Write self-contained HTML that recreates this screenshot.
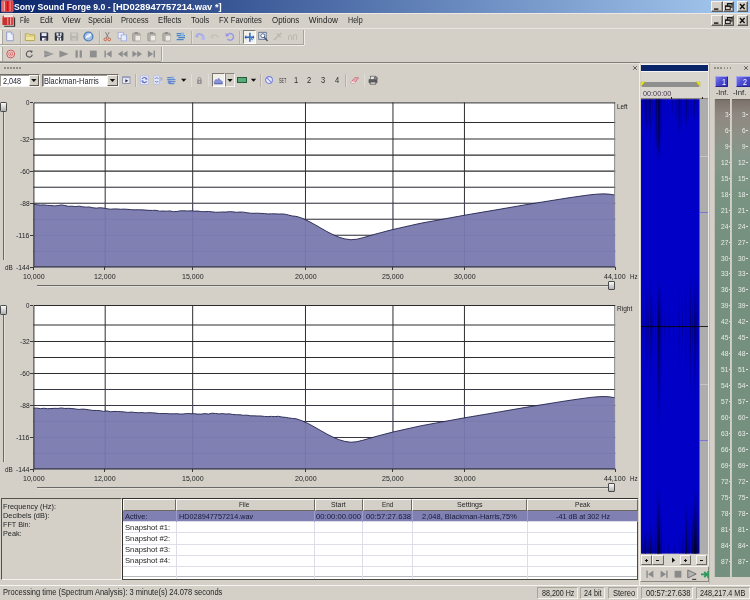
<!DOCTYPE html>
<html><head><meta charset="utf-8"><title>Sony Sound Forge 9.0</title>
<style>
*{margin:0;padding:0;box-sizing:border-box}
html,body{width:750px;height:600px;overflow:hidden;background:#d4d0c8;font-family:"Liberation Sans","DejaVu Sans",sans-serif;font-size:8px;color:#2a2a2a}
#root{position:absolute;left:0;top:0;width:750px;height:600px;will-change:transform}
.a{position:absolute}
.t{position:absolute;white-space:nowrap;line-height:1;transform-origin:0 0}
</style></head><body>
<div id="root">
<div class="a" style="left:0px;top:0px;width:750px;height:12.5px;background:linear-gradient(90deg,#0a246a 0%,#5777b0 50%,#a6caf0 100%)"></div><div class="a" style="left:0px;top:12.5px;width:750px;height:1.1px;background:#ebe9e3"></div><svg class="a" style="left:1px;top:0px" width="13" height="13" viewBox="0 0 13 13" ><g transform="translate(0.00 0.00)"><rect x="0.3" y="0.6" width="11.8" height="11.2" rx="0.8" fill="#da3434" stroke="#eeb0b0" stroke-width="0.5"/><rect x="1" y="1.2" width="2" height="10" fill="#e86a6a"/><rect x="3" y="1.2" width="1.1" height="10" fill="#f3a8a8"/><rect x="4.1" y="1.2" width="2" height="10" fill="#e03232"/><rect x="6.1" y="1.2" width="1" height="10" fill="#a81c1c"/><rect x="7.1" y="1.2" width="1.5" height="10" fill="#ea2424"/><rect x="8.6" y="1.2" width="1" height="10" fill="#f3a0a0"/></g></svg><span class="t" style="left:14.4px;top:3.00px;font-size:9.2px;color:#fff;font-weight:bold;white-space:pre;transform:scaleX(0.941);">Sony Sound Forge 9.0 - </span><span class="t" style="left:113.3px;top:3.00px;font-size:9.2px;color:#fff;font-weight:bold;transform:scaleX(1.018);">[HD028947757214.wav *]</span><div class="a" style="left:711px;top:1px;width:11.6px;height:10.8px;background:#d4d0c8;border:1px solid;border-color:#f6f4f0 #5e5c57 #5e5c57 #f6f4f0;box-shadow:inset -1px -1px 0 #9a968e"></div><svg class="a" style="left:711px;top:1px" width="12" height="11" viewBox="0 0 12 11" ><g transform="translate(0.00 0.00)"><rect x="3" y="7.4" width="4.4" height="1.4" fill="#111"/></g></svg><div class="a" style="left:722.8px;top:1px;width:11.6px;height:10.8px;background:#d4d0c8;border:1px solid;border-color:#f6f4f0 #5e5c57 #5e5c57 #f6f4f0;box-shadow:inset -1px -1px 0 #9a968e"></div><svg class="a" style="left:722px;top:1px" width="13" height="11" viewBox="0 0 13 11" ><g transform="translate(0.80 0.00)"><rect x="4.6" y="2.6" width="4.6" height="3.6" fill="none" stroke="#111" stroke-width="0.9"/><rect x="4.2" y="2.2" width="5.4" height="1.2" fill="#111"/><rect x="2.6" y="5" width="4.8" height="3.6" fill="#d4d0c8" stroke="#111" stroke-width="0.9"/><rect x="2.2" y="4.6" width="5.6" height="1.2" fill="#111"/></g></svg><div class="a" style="left:736.6px;top:1px;width:11.6px;height:10.8px;background:#d4d0c8;border:1px solid;border-color:#f6f4f0 #5e5c57 #5e5c57 #f6f4f0;box-shadow:inset -1px -1px 0 #9a968e"></div><svg class="a" style="left:736px;top:1px" width="13" height="11" viewBox="0 0 13 11" ><g transform="translate(0.60 0.00)"><path d="M3.4 3 L8 8 M8 3 L3.4 8" stroke="#111" stroke-width="1.4"/></g></svg><svg class="a" style="left:2px;top:14px" width="14" height="13" viewBox="0 0 14 13" ><g transform="translate(0.00 0.00)"><path d="M2.2 12.2 H12.6 V3.4" fill="none" stroke="#2e2e2e" stroke-width="1.1"/><rect x="0.6" y="1.8" width="11" height="9.2" rx="0.8" fill="#de4646"/><rect x="0.6" y="4" width="4.4" height="7" fill="#c83030"/><rect x="2" y="1" width="9" height="2.2" fill="#f6e4e2"/><rect x="5.4" y="3.6" width="1.1" height="7" fill="#f2a6a6"/><rect x="7.9" y="3.6" width="1.1" height="7" fill="#f2a6a6"/><rect x="6.6" y="3.6" width="1.2" height="7" fill="#b82222"/></g></svg><span class="t" style="left:19.8px;top:17.00px;font-size:8.2px;color:#242424;transform:scaleX(0.735);">File</span><span class="t" style="left:39.6px;top:17.00px;font-size:8.2px;color:#242424;transform:scaleX(0.914);">Edit</span><span class="t" style="left:61.9px;top:17.00px;font-size:8.2px;color:#242424;transform:scaleX(1.056);">View</span><span class="t" style="left:87.5px;top:17.00px;font-size:8.2px;color:#242424;transform:scaleX(0.894);">Special</span><span class="t" style="left:120.5px;top:17.00px;font-size:8.2px;color:#242424;transform:scaleX(0.930);">Process</span><span class="t" style="left:157.9px;top:17.00px;font-size:8.2px;color:#242424;transform:scaleX(0.940);">Effects</span><span class="t" style="left:191px;top:17.00px;font-size:8.2px;color:#242424;transform:scaleX(0.957);">Tools</span><span class="t" style="left:219.2px;top:17.00px;font-size:8.2px;color:#242424;transform:scaleX(0.924);">FX Favorites</span><span class="t" style="left:272px;top:17.00px;font-size:8.2px;color:#242424;transform:scaleX(0.964);">Options</span><span class="t" style="left:308.8px;top:17.00px;font-size:8.2px;color:#242424;">Window</span><span class="t" style="left:347.5px;top:17.00px;font-size:8.2px;color:#242424;transform:scaleX(0.867);">Help</span><div class="a" style="left:711px;top:15px;width:11.6px;height:10.8px;background:#d4d0c8;border:1px solid;border-color:#f6f4f0 #5e5c57 #5e5c57 #f6f4f0;box-shadow:inset -1px -1px 0 #9a968e"></div><svg class="a" style="left:711px;top:15px" width="12" height="11" viewBox="0 0 12 11" ><g transform="translate(0.00 0.00)"><rect x="3" y="7.4" width="4.4" height="1.4" fill="#111"/></g></svg><div class="a" style="left:722.8px;top:15px;width:11.6px;height:10.8px;background:#d4d0c8;border:1px solid;border-color:#f6f4f0 #5e5c57 #5e5c57 #f6f4f0;box-shadow:inset -1px -1px 0 #9a968e"></div><svg class="a" style="left:722px;top:15px" width="13" height="11" viewBox="0 0 13 11" ><g transform="translate(0.80 0.00)"><rect x="4.6" y="2.6" width="4.6" height="3.6" fill="none" stroke="#111" stroke-width="0.9"/><rect x="4.2" y="2.2" width="5.4" height="1.2" fill="#111"/><rect x="2.6" y="5" width="4.8" height="3.6" fill="#d4d0c8" stroke="#111" stroke-width="0.9"/><rect x="2.2" y="4.6" width="5.6" height="1.2" fill="#111"/></g></svg><div class="a" style="left:736.6px;top:15px;width:11.6px;height:10.8px;background:#d4d0c8;border:1px solid;border-color:#f6f4f0 #5e5c57 #5e5c57 #f6f4f0;box-shadow:inset -1px -1px 0 #9a968e"></div><svg class="a" style="left:736px;top:15px" width="13" height="11" viewBox="0 0 13 11" ><g transform="translate(0.60 0.00)"><path d="M3.4 3 L8 8 M8 3 L3.4 8" stroke="#111" stroke-width="1.4"/></g></svg><div class="a" style="left:0px;top:27.6px;width:750px;height:0.8px;background:#c2beb6"></div><div class="a" style="left:0px;top:28.4px;width:750px;height:0.8px;background:#e8e6e0"></div><div class="a" style="left:0px;top:44.3px;width:303.3px;height:1px;background:#a8a49c"></div><div class="a" style="left:0px;top:45.3px;width:304.3px;height:0.8px;background:#f0eee8"></div><div class="a" style="left:302.8px;top:29.5px;width:1px;height:15.3px;background:#a8a49c"></div><div class="a" style="left:303.8px;top:29.5px;width:0.8px;height:15.3px;background:#f0eee8"></div><div class="a" style="left:0px;top:29.5px;width:2px;height:14.8px;background:#eeece6"></div><div class="a" style="left:2px;top:29.5px;width:0.8px;height:14.8px;background:#aaa69e"></div><div class="a" style="left:0px;top:60.5px;width:161px;height:1px;background:#a8a49c"></div><div class="a" style="left:0px;top:61.5px;width:162px;height:0.8px;background:#f0eee8"></div><div class="a" style="left:160.5px;top:46.5px;width:1px;height:14.5px;background:#a8a49c"></div><div class="a" style="left:161.5px;top:46.5px;width:0.8px;height:14.5px;background:#f0eee8"></div><div class="a" style="left:0px;top:46.5px;width:2px;height:14px;background:#eeece6"></div><div class="a" style="left:2px;top:46.5px;width:0.8px;height:14px;background:#aaa69e"></div><svg class="a" style="left:4px;top:30px" width="12" height="13" viewBox="0 0 12 13" ><g transform="translate(0.00 0.50)"><path d="M2.7 1.5 H7.2 L9.3 3.6 V10.2 H2.7 Z" fill="#eef1fb" stroke="#8a98c8" stroke-width="0.9"/><path d="M7.2 1.5 V3.6 H9.3" fill="#c8d2ee" stroke="#8a98c8" stroke-width="0.6"/></g></svg><div class="a" style="left:20.1px;top:31px;width:0.9px;height:12.5px;background:#b6b2aa"></div><div class="a" style="left:21px;top:31px;width:0.7px;height:12.5px;background:#e0ddd6"></div><svg class="a" style="left:24px;top:30px" width="12" height="13" viewBox="0 0 12 13" ><g transform="translate(0.00 0.50)"><path d="M1.3 3.3 H4.6 L5.5 4.3 H10.7 V10 H1.3 Z" fill="#efe3a0" stroke="#b4a44c" stroke-width="0.9"/><path d="M1.3 5.6 H10.7" stroke="#c8b860" stroke-width="0.7"/></g></svg><svg class="a" style="left:38px;top:30px" width="12" height="13" viewBox="0 0 12 13" ><g transform="translate(0.00 0.50)"><rect x="2" y="2" width="8.2" height="8.2" rx="0.6" fill="#2b2f46"/><rect x="3.6" y="2.6" width="5" height="3" fill="#e8ecf6"/><rect x="4" y="7.3" width="4.2" height="2.9" fill="#f4f4f8"/><rect x="6.6" y="7.8" width="1" height="2" fill="#2b2f46"/></g></svg><svg class="a" style="left:53px;top:30px" width="12" height="13" viewBox="0 0 12 13" ><g transform="translate(0.00 0.50)"><rect x="1.8" y="2" width="8.6" height="8.2" rx="0.6" fill="#30343e"/><rect x="3.4" y="2.6" width="5.2" height="2.6" fill="#dfe3ee"/><rect x="4" y="7.3" width="4.2" height="2.9" fill="#eeeef2"/><rect x="5.6" y="2.2" width="1.2" height="7.6" fill="#30343e"/><rect x="4.4" y="5.6" width="3.6" height="1.2" fill="#e8e8f0"/></g></svg><svg class="a" style="left:68px;top:30px" width="12" height="13" viewBox="0 0 12 13" ><g transform="translate(0.00 0.50)"><rect x="2" y="2" width="8.2" height="8.2" rx="0.6" fill="#b9b6ae"/><rect x="3.6" y="2.6" width="5" height="3" fill="#d0cdc6"/><rect x="4" y="7.3" width="4.2" height="2.9" fill="#c8c5be"/></g></svg><svg class="a" style="left:82px;top:30px" width="13" height="13" viewBox="0 0 13 13" ><g transform="translate(0.40 0.50)"><circle cx="6" cy="6" r="4.5" fill="#9fc0e4" stroke="#4a78b4" stroke-width="1.2"/><path d="M3.6 8 Q4.4 4.4 8 3.8 Q7.6 6.4 5 6.6" fill="none" stroke="#f4f8fe" stroke-width="1.2"/></g></svg><div class="a" style="left:98.7px;top:31px;width:0.9px;height:12.5px;background:#b6b2aa"></div><div class="a" style="left:99.6px;top:31px;width:0.7px;height:12.5px;background:#e0ddd6"></div><svg class="a" style="left:101px;top:30px" width="13" height="13" viewBox="0 0 13 13" ><g transform="translate(0.30 0.50)"><path d="M4.2 1.6 L7.2 7.6 M7.8 1.6 L4.8 7.6" stroke="#858585" stroke-width="1"/><circle cx="4.1" cy="8.9" r="1.35" fill="none" stroke="#c8623e" stroke-width="0.95"/><circle cx="7.9" cy="8.9" r="1.35" fill="none" stroke="#c8623e" stroke-width="0.95"/></g></svg><svg class="a" style="left:116px;top:30px" width="13" height="13" viewBox="0 0 13 13" ><g transform="translate(0.30 0.50)"><rect x="1.8" y="1.8" width="5.4" height="6" fill="#f0f2fb" stroke="#9aa6dc" stroke-width="0.8"/><rect x="4.8" y="4.4" width="5.4" height="6" fill="#e9edf9" stroke="#9aa6dc" stroke-width="0.8"/></g></svg><svg class="a" style="left:130px;top:30px" width="13" height="13" viewBox="0 0 13 13" ><g transform="translate(0.50 0.50)"><rect x="2" y="2.6" width="7.6" height="7.8" rx="0.8" fill="#b2aea8" stroke="#9c9892" stroke-width="0.7"/><rect x="4.2" y="1.6" width="3.2" height="1.8" fill="#8e8a84"/><rect x="4.6" y="5" width="5.4" height="5.4" fill="#ecebe6" stroke="#b4b0a8" stroke-width="0.6"/></g></svg><svg class="a" style="left:145px;top:30px" width="13" height="13" viewBox="0 0 13 13" ><g transform="translate(0.70 0.50)"><rect x="2" y="2.6" width="7.6" height="7.8" rx="0.8" fill="#b2aea8" stroke="#9c9892" stroke-width="0.7"/><rect x="4.2" y="1.6" width="3.2" height="1.8" fill="#8e8a84"/><rect x="4.6" y="5" width="5.4" height="5.4" fill="#ecebe6" stroke="#b4b0a8" stroke-width="0.6"/></g></svg><svg class="a" style="left:160px;top:30px" width="13" height="13" viewBox="0 0 13 13" ><g transform="translate(0.70 0.50)"><rect x="2" y="2.6" width="7.6" height="7.8" rx="0.8" fill="#b2aea8" stroke="#9c9892" stroke-width="0.7"/><rect x="4.2" y="1.6" width="3.2" height="1.8" fill="#8e8a84"/><rect x="4.6" y="5" width="5.4" height="5.4" fill="#ecebe6" stroke="#b4b0a8" stroke-width="0.6"/></g></svg><svg class="a" style="left:174px;top:30px" width="13" height="13" viewBox="0 0 13 13" ><g transform="translate(0.60 0.50)"><path d="M2 3.2 H9 M2 5.2 H10.4 M3.5 7.2 H10.4 M2 9.2 H9" stroke="#4a86c4" stroke-width="1.2"/><rect x="6.2" y="2" width="3" height="3.6" fill="#8fb6e0"/></g></svg><div class="a" style="left:191px;top:31px;width:0.9px;height:12.5px;background:#b6b2aa"></div><div class="a" style="left:191.9px;top:31px;width:0.7px;height:12.5px;background:#e0ddd6"></div><svg class="a" style="left:194px;top:30px" width="13" height="13" viewBox="0 0 13 13" ><g transform="translate(0.40 0.50)"><path d="M1.6 6.6 Q2.6 3 5.6 3.6 Q8.6 4.2 9.6 7" fill="none" stroke="#a6aae8" stroke-width="1.8"/><rect x="7" y="6" width="3.6" height="3.4" fill="#b4b8ec"/><path d="M1.4 4 L2 7.6 L4.6 6 Z" fill="#a6aae8"/></g></svg><svg class="a" style="left:208px;top:30px" width="13" height="13" viewBox="0 0 13 13" ><g transform="translate(0.70 0.50)"><path d="M2.4 7.4 Q3.4 4 6.4 4.4 Q9 4.8 9.8 7.4" fill="none" stroke="#c6c2ba" stroke-width="1.5"/><path d="M2 4.6 L2.6 8 L5.6 6.8 Z" fill="#c6c2ba"/></g></svg><svg class="a" style="left:224px;top:30px" width="12" height="13" viewBox="0 0 12 13" ><g transform="translate(0.00 0.50)"><path d="M3 5 A3.4 3.4 0 1 1 3.6 8.6" fill="none" stroke="#9498e6" stroke-width="1.5"/><path d="M1.4 2.6 L2 6.4 L5.4 5 Z" fill="#9498e6"/></g></svg><div class="a" style="left:238.7px;top:31px;width:0.9px;height:12.5px;background:#b6b2aa"></div><div class="a" style="left:239.6px;top:31px;width:0.7px;height:12.5px;background:#e0ddd6"></div><div class="a" style="left:242.7px;top:30.2px;width:13.5px;height:14px;background:#f3f1ec;border:1px solid;border-color:#807c74 #fff #fff #807c74"></div><svg class="a" style="left:243px;top:31px" width="13" height="13" viewBox="0 0 13 13" ><g transform="translate(0.30 0.20)"><path d="M6.6 1.6 V10.6 M1.6 6 H10.4" stroke="#2a64b4" stroke-width="1.5"/><path d="M3 3.8 L1.2 6 L3 8.2 Z M9.6 3.8 L11 6 L9.6 8.2Z" fill="#2a64b4"/><path d="M6.6 6 L9.4 8.8" stroke="#5a8cd0" stroke-width="1.2"/></g></svg><svg class="a" style="left:257px;top:30px" width="13" height="13" viewBox="0 0 13 13" ><g transform="translate(0.20 0.50)"><rect x="1.6" y="1.8" width="7.4" height="7" fill="#e6eaf2" stroke="#5c6c8c" stroke-width="0.9"/><circle cx="5.6" cy="5.2" r="2" fill="#fff" stroke="#46587c" stroke-width="0.9"/><path d="M7 6.8 L10.4 10.4" stroke="#46587c" stroke-width="1.4"/></g></svg><svg class="a" style="left:271px;top:30px" width="13" height="13" viewBox="0 0 13 13" ><g transform="translate(0.80 0.50)"><path d="M2 9.6 L9.6 2.4 M5 3 L9 7" stroke="#bdb9b1" stroke-width="1.5"/><circle cx="4" cy="8" r="1.3" fill="#c4c0b8"/></g></svg><svg class="a" style="left:287px;top:30px" width="12" height="13" viewBox="0 0 12 13" ><g transform="translate(0.00 0.50)"><path d="M1.6 9.6 V6 Q3 3 4.6 6 V9.6 M6.4 9.6 V5 Q8 2.4 9.6 5 V9.6" fill="none" stroke="#bdb9b1" stroke-width="1.1"/></g></svg><svg class="a" style="left:4px;top:48px" width="13" height="12" viewBox="0 0 13 12" ><g transform="translate(0.70 0.00)"><circle cx="6" cy="6" r="3.9" fill="#f2dedc" stroke="#c84e4e" stroke-width="0.95"/><circle cx="6" cy="6" r="2.1" fill="#f6e6e4" stroke="#cf5c5c" stroke-width="0.8"/><circle cx="6" cy="6" r="0.85" fill="#c84444"/></g></svg><div class="a" style="left:20.1px;top:48px;width:0.9px;height:12px;background:#b6b2aa"></div><div class="a" style="left:21px;top:48px;width:0.7px;height:12px;background:#e0ddd6"></div><svg class="a" style="left:23px;top:48px" width="13" height="12" viewBox="0 0 13 12" ><g transform="translate(0.30 0.00)"><path d="M8.4 4.2 A3 3 0 1 0 9 6.6" fill="none" stroke="#585858" stroke-width="1.1"/><path d="M6.8 2.4 L9.4 2.8 L8.5 5.2 Z" fill="#585858"/></g></svg><svg class="a" style="left:43px;top:48px" width="13" height="12" viewBox="0 0 13 12" ><g transform="translate(0.30 0.00)"><path d="M1 2.4 L10.6 6 L1 9.6 Z" fill="#8e8e8e"/><path d="M1 6 H10" stroke="#b8b8b8" stroke-width="0.8"/></g></svg><svg class="a" style="left:58px;top:48px" width="12" height="12" viewBox="0 0 12 12" ><g transform="translate(0.00 0.00)"><path d="M1.4 2.4 L10.6 6 L1.4 9.6 Z" fill="#8e8e8e"/></g></svg><svg class="a" style="left:72px;top:48px" width="13" height="12" viewBox="0 0 13 12" ><g transform="translate(0.70 0.00)"><rect x="2.8" y="2.4" width="2.3" height="7.2" fill="#8e8e8e"/><rect x="6.9" y="2.4" width="2.3" height="7.2" fill="#8e8e8e"/></g></svg><svg class="a" style="left:87px;top:48px" width="13" height="12" viewBox="0 0 13 12" ><g transform="translate(0.30 0.00)"><rect x="2.6" y="2.6" width="6.8" height="6.8" fill="#8e8e8e"/></g></svg><svg class="a" style="left:102px;top:48px" width="12" height="12" viewBox="0 0 12 12" ><g transform="translate(0.00 0.00)"><rect x="2.4" y="2.6" width="1.5" height="6.8" fill="#8e8e8e"/><path d="M9.6 2.6 L4.2 6 L9.6 9.4 Z" fill="#8e8e8e"/></g></svg><svg class="a" style="left:116px;top:48px" width="13" height="12" viewBox="0 0 13 12" ><g transform="translate(0.70 0.00)"><path d="M6 2.8 L1.2 6 L6 9.2 Z M10.8 2.8 L6 6 L10.8 9.2 Z" fill="#8e8e8e"/></g></svg><svg class="a" style="left:131px;top:48px" width="13" height="12" viewBox="0 0 13 12" ><g transform="translate(0.20 0.00)"><path d="M1.2 2.8 L6 6 L1.2 9.2 Z M6 2.8 L10.8 6 L6 9.2 Z" fill="#8e8e8e"/></g></svg><svg class="a" style="left:145px;top:48px" width="13" height="12" viewBox="0 0 13 12" ><g transform="translate(0.40 0.00)"><rect x="8.1" y="2.6" width="1.5" height="6.8" fill="#8e8e8e"/><path d="M2.4 2.6 L7.8 6 L2.4 9.4 Z" fill="#8e8e8e"/></g></svg><div class="a" style="left:0px;top:61.6px;width:640px;height:1px;background:#827e76"></div><div class="a" style="left:640px;top:61.6px;width:110px;height:1px;background:#b6b2aa"></div><div class="a" style="left:0px;top:62.6px;width:750px;height:1px;background:#e4e2dc"></div><div class="a" style="left:641px;top:63.6px;width:67px;height:1px;background:#f4f2ee"></div><div class="a" style="left:4.2px;top:67.2px;width:1.6px;height:1.6px;background:#86827b;border-radius:0.7px"></div><div class="a" style="left:7.2px;top:67.2px;width:1.6px;height:1.6px;background:#86827b;border-radius:0.7px"></div><div class="a" style="left:10.2px;top:67.2px;width:1.6px;height:1.6px;background:#86827b;border-radius:0.7px"></div><div class="a" style="left:13.2px;top:67.2px;width:1.6px;height:1.6px;background:#86827b;border-radius:0.7px"></div><div class="a" style="left:16.2px;top:67.2px;width:1.6px;height:1.6px;background:#86827b;border-radius:0.7px"></div><div class="a" style="left:19.2px;top:67.2px;width:1.6px;height:1.6px;background:#86827b;border-radius:0.7px"></div><svg class="a" style="left:632px;top:65px" width="6" height="6" viewBox="0 0 6 6" ><g transform="translate(0.00 0.00)"><path d="M1.2 1.2 L4.8 4.8 M4.8 1.2 L1.2 4.8" stroke="#4a4a4a" stroke-width="0.85"/></g></svg><div class="a" style="left:-1px;top:73.5px;width:41px;height:13.3px;background:#fff;border:1px solid;border-color:#6e6a64 #f4f2ee #f4f2ee #6e6a64;box-shadow:inset 1px 1px 0 #a09c94"></div><span class="t" style="left:2.7px;top:78.00px;font-size:8.2px;color:#26262e;transform:scaleX(0.883);">2,048</span><div class="a" style="left:28.7px;top:75px;width:10.3px;height:10.8px;background:#d4d0c8;border:1px solid;border-color:#f8f6f2 #5c5852 #5c5852 #f8f6f2"></div><svg class="a" style="left:31px;top:78px" width="6" height="4" viewBox="0 0 6 4" ><g transform="translate(0.15 0.95)"><path d="M0 0 H5.4 L2.7 3 Z" fill="#111"/></g></svg><div class="a" style="left:42.4px;top:73.5px;width:76.2px;height:13.3px;background:#fff;border:1px solid;border-color:#6e6a64 #f4f2ee #f4f2ee #6e6a64;box-shadow:inset 1px 1px 0 #a09c94"></div><span class="t" style="left:44.4px;top:78.00px;font-size:8.2px;color:#26262e;transform:scaleX(0.906);">Blackman-Harris</span><div class="a" style="left:107.3px;top:75px;width:10.3px;height:10.8px;background:#d4d0c8;border:1px solid;border-color:#f8f6f2 #5c5852 #5c5852 #f8f6f2"></div><svg class="a" style="left:109px;top:78px" width="7" height="4" viewBox="0 0 7 4" ><g transform="translate(0.75 0.95)"><path d="M0 0 H5.4 L2.7 3 Z" fill="#111"/></g></svg><svg class="a" style="left:120px;top:74px" width="13" height="12" viewBox="0 0 13 12" ><g transform="translate(0.20 0.00)"><rect x="2.4" y="2.8" width="7.4" height="6.6" fill="#e6e9f4" stroke="#8088a8" stroke-width="0.8"/><rect x="2.4" y="2.8" width="7.4" height="1.3" fill="#9aa2c6"/><path d="M5.2 5.2 L8 6.8 L5.2 8.4 Z" fill="#2a2a3a"/></g></svg><div class="a" style="left:135.1px;top:74px;width:0.9px;height:12.5px;background:#b6b2aa"></div><div class="a" style="left:136px;top:74px;width:0.7px;height:12.5px;background:#e0ddd6"></div><svg class="a" style="left:138px;top:74px" width="13" height="12" viewBox="0 0 13 12" ><g transform="translate(0.40 0.00)"><rect x="2.2" y="1.8" width="7.6" height="8.6" fill="#e4e9f7" stroke="#b0bae2" stroke-width="0.7"/><path d="M3.8 5 A2.4 2.4 0 0 1 8.2 5 M8.2 7.2 A2.4 2.4 0 0 1 3.8 7.2" fill="none" stroke="#5a6cc4" stroke-width="1.1"/><path d="M7.4 3.4 L9.4 5.6 L6.8 5.6Z M4.6 8.8 L2.6 6.6 L5.2 6.6Z" fill="#5a6cc4"/></g></svg><svg class="a" style="left:152px;top:74px" width="12" height="12" viewBox="0 0 12 12" ><g transform="translate(0.00 0.00)"><rect x="1.8" y="1.8" width="5.6" height="8.4" fill="#e4e9f7" stroke="#b0bae2" stroke-width="0.7"/><path d="M3 4.8 A1.9 1.9 0 0 1 6.4 4.8 M6.4 7 A1.9 1.9 0 0 1 3 7" fill="none" stroke="#6a7acc" stroke-width="1"/><path d="M8 3.2 L10.4 6.2 M10.2 3.4 L8.4 6.8" stroke="#9aa6dc" stroke-width="0.9"/><circle cx="9.2" cy="8.4" r="1.2" fill="#ccd4f0"/></g></svg><svg class="a" style="left:165px;top:74px" width="13" height="12" viewBox="0 0 13 12" ><g transform="translate(0.20 0.00)"><path d="M2 3.6 H8.4 M2 5.6 H10.2 M3.8 7.6 H10.2 M3.8 9.6 H9" stroke="#5c86d0" stroke-width="1.1"/><rect x="6" y="2.4" width="3" height="2.8" fill="#93b0e4"/><rect x="2.6" y="6.6" width="3" height="2.8" fill="#6a88d6"/></g></svg><svg class="a" style="left:181px;top:78px" width="6" height="4" viewBox="0 0 6 4" ><g transform="translate(0.00 0.80)"><path d="M0 0 H5.4 L2.7 3 Z" fill="#111"/></g></svg><div class="a" style="left:190.5px;top:74px;width:0.9px;height:12.5px;background:#b6b2aa"></div><div class="a" style="left:191.4px;top:74px;width:0.7px;height:12.5px;background:#e0ddd6"></div><svg class="a" style="left:193px;top:74px" width="13" height="13" viewBox="0 0 13 13" ><g transform="translate(0.40 0.40)"><rect x="3.7" y="5.4" width="4.6" height="4.2" rx="0.5" fill="#939393"/><path d="M4.6 5.6 V4.4 A1.4 1.4 0 0 1 7.4 4.4 V5.6" fill="none" stroke="#8a8a8a" stroke-width="0.9"/><rect x="5.6" y="6.6" width="0.8" height="1.6" fill="#dcdcdc"/></g></svg><div class="a" style="left:207.5px;top:74px;width:0.9px;height:12.5px;background:#b6b2aa"></div><div class="a" style="left:208.4px;top:74px;width:0.7px;height:12.5px;background:#e0ddd6"></div><div class="a" style="left:211.5px;top:73.3px;width:13.5px;height:13.7px;background:#f1efea;border:1px solid;border-color:#7a766e #fff #fff #7a766e"></div><svg class="a" style="left:212px;top:74px" width="13" height="13" viewBox="0 0 13 13" ><g transform="translate(0.30 0.30)"><path d="M2 9.2 V7.4 L3.8 5 L5 6.2 L6.4 4 L8.4 6.4 L10 7.2 V9.2 Z" fill="#8a94d8" stroke="#6470c0" stroke-width="0.7"/><path d="M2 9.5 H10.2" stroke="#4a56a0" stroke-width="0.8"/></g></svg><div class="a" style="left:225px;top:73.3px;width:9.6px;height:13.7px;background:#d4d0c8;border:1px solid;border-color:#8a867e #f4f2ee #f4f2ee #8a867e"></div><svg class="a" style="left:227px;top:78px" width="6" height="4" viewBox="0 0 6 4" ><g transform="translate(0.30 0.90)"><path d="M0 0 H5.4 L2.7 3 Z" fill="#111"/></g></svg><div class="a" style="left:237px;top:77.4px;width:9.8px;height:5.5px;background:#58ac78;border:1px solid #1e5c3c"></div><svg class="a" style="left:250px;top:78px" width="7" height="4" viewBox="0 0 7 4" ><g transform="translate(0.80 0.80)"><path d="M0 0 H5.4 L2.7 3 Z" fill="#111"/></g></svg><div class="a" style="left:260.1px;top:74px;width:0.9px;height:12.5px;background:#b6b2aa"></div><div class="a" style="left:261px;top:74px;width:0.7px;height:12.5px;background:#e0ddd6"></div><svg class="a" style="left:263px;top:74px" width="12" height="12" viewBox="0 0 12 12" ><g transform="translate(0.00 0.00)"><circle cx="6" cy="6" r="3.4" fill="#eceefb" stroke="#7680da" stroke-width="1.05"/><path d="M3.7 3.7 L8.3 8.3" stroke="#7680da" stroke-width="1.05"/></g></svg><span class="t" style="left:279.2px;top:77.00px;font-size:7.4px;color:#303030;transform:scaleX(0.515);">SET</span><span class="t" style="left:294.3px;top:76.00px;font-size:8.4px;color:#2c2c2c;transform:scaleX(0.899);">1</span><span class="t" style="left:307.3px;top:76.00px;font-size:8.4px;color:#2c2c2c;transform:scaleX(0.899);">2</span><span class="t" style="left:321.3px;top:76.00px;font-size:8.4px;color:#2c2c2c;transform:scaleX(0.899);">3</span><span class="t" style="left:334.9px;top:76.00px;font-size:8.4px;color:#2c2c2c;transform:scaleX(0.899);">4</span><div class="a" style="left:344.9px;top:74px;width:0.9px;height:12.5px;background:#b6b2aa"></div><div class="a" style="left:345.8px;top:74px;width:0.7px;height:12.5px;background:#e0ddd6"></div><svg class="a" style="left:348px;top:74px" width="13" height="12" viewBox="0 0 13 12" ><g transform="translate(0.60 0.00)"><path d="M2 8.6 L6.6 3.4 L10 3.8 L5.6 9.4 Z" fill="#e8a8b0" stroke="#c8606c" stroke-width="0.7"/><path d="M2 8.6 L5.6 9.4 L6.4 8.2 L3 7.4Z" fill="#f4f0f0"/></g></svg><div class="a" style="left:363.5px;top:74px;width:0.9px;height:12.5px;background:#b6b2aa"></div><div class="a" style="left:364.4px;top:74px;width:0.7px;height:12.5px;background:#e0ddd6"></div><svg class="a" style="left:367px;top:74px" width="12" height="12" viewBox="0 0 12 12" ><g transform="translate(0.00 0.00)"><rect x="1.6" y="5" width="8.8" height="4.2" rx="0.8" fill="#5c5c5c"/><rect x="3.4" y="2.2" width="5.2" height="3.2" fill="#e4e4e4" stroke="#5c5c5c" stroke-width="0.7"/><rect x="3.2" y="8" width="5.6" height="2.2" fill="#cfcfcf" stroke="#4c4c4c" stroke-width="0.6"/><circle cx="8.8" cy="4.4" r="1.6" fill="#8c8c8c" stroke="#3c3c3c" stroke-width="0.6"/></g></svg><svg class="a" style="left:33px;top:102px" width="583" height="166" viewBox="0 0 583 166" ><g transform="translate(0.40 0.40)"><rect x="0" y="0" width="581.8" height="165" fill="#fff"/><path d="M0 148.96 H581.8" stroke="#2c2c2c" stroke-width="1.1"/><path d="M0 132.92 H581.8" stroke="#2c2c2c" stroke-width="1.1"/><path d="M0 116.87 H581.8" stroke="#2c2c2c" stroke-width="1.1"/><path d="M0 100.83 H581.8" stroke="#2c2c2c" stroke-width="1.1"/><path d="M0 84.79 H581.8" stroke="#2c2c2c" stroke-width="1.1"/><path d="M0 68.75 H581.8" stroke="#2c2c2c" stroke-width="1.1"/><path d="M0 52.71 H581.8" stroke="#2c2c2c" stroke-width="1.1"/><path d="M0 36.67 H581.8" stroke="#2c2c2c" stroke-width="1.1"/><path d="M0 20.12 H581.8" stroke="#2c2c2c" stroke-width="1.1"/><path d="M71.78 0 V165" stroke="#2e2e2e" stroke-width="1"/><path d="M159.28 0 V165" stroke="#2e2e2e" stroke-width="1"/><path d="M272.07 0 V165" stroke="#2e2e2e" stroke-width="1"/><path d="M359.56 0 V165" stroke="#2e2e2e" stroke-width="1"/><path d="M431.05 0 V165" stroke="#2e2e2e" stroke-width="1"/><path d="M581.3 0 V165" stroke="#7e7e7e" stroke-width="1"/><path d="M0 165 L0.00 101.51 L3.50 102.38 L7.00 102.61 L10.50 102.51 L14.00 102.94 L17.50 103.11 L21.00 103.49 L24.50 103.17 L28.00 102.53 L31.50 103.10 L35.00 103.93 L38.50 103.77 L42.00 104.20 L45.50 103.75 L49.00 104.30 L52.50 104.73 L56.00 104.55 L59.50 105.42 L63.00 105.70 L66.50 105.32 L70.00 105.63 L73.50 106.30 L77.00 106.79 L80.50 106.51 L84.00 106.55 L87.50 106.87 L91.00 106.68 L94.50 106.95 L98.00 107.25 L101.50 107.42 L105.00 107.33 L108.50 107.47 L112.00 107.62 L115.50 107.97 L119.00 107.99 L122.50 107.93 L126.00 108.74 L129.50 108.62 L133.00 108.78 L136.50 108.51 L140.00 109.25 L143.50 109.11 L147.00 108.38 L150.50 108.41 L154.00 108.58 L157.50 108.44 L161.00 108.72 L164.50 108.64 L168.00 109.22 L171.50 109.23 L175.00 109.08 L178.50 109.45 L182.00 109.81 L185.50 109.81 L189.00 109.56 L192.50 109.66 L196.00 109.24 L199.50 109.44 L203.00 109.91 L206.50 109.63 L210.00 109.74 L213.50 110.36 L217.00 110.78 L220.50 110.90 L224.00 110.80 L227.50 110.99 L231.00 111.18 L234.50 111.52 L238.00 111.43 L241.50 111.44 L245.00 111.64 L248.50 111.51 L252.00 111.87 L255.50 112.75 L259.00 113.57 L262.50 113.95 L266.00 114.85 L269.50 116.16 L275.50 118.96 L281.50 122.27 L287.50 125.72 L293.50 129.17 L299.50 132.18 L305.50 134.76 L311.50 136.51 L317.50 137.34 L323.50 136.79 L329.50 135.34 L335.50 133.58 L341.50 131.83 L347.50 130.25 L353.50 128.67 L359.50 127.11 L365.50 125.76 L371.50 124.40 L377.50 123.05 L383.50 121.70 L389.50 120.47 L395.50 119.36 L401.50 118.26 L407.50 117.16 L413.50 116.05 L419.50 114.95 L425.50 113.85 L431.50 112.76 L437.50 111.74 L443.50 110.72 L449.50 109.70 L455.50 108.69 L461.50 107.67 L467.50 106.64 L473.50 105.60 L479.50 104.56 L485.50 103.52 L491.50 102.48 L497.50 101.46 L503.50 100.50 L509.50 99.54 L515.50 98.58 L521.50 97.62 L527.50 96.66 L533.50 95.70 L539.50 94.79 L545.50 93.95 L551.50 93.11 L557.50 92.32 L563.50 91.78 L569.50 91.46 L575.50 91.71 L581.00 92.60 L581.8 165 Z" fill="#8080b3"/><path d="M71.78 99 V165" stroke="#5c5ca0" stroke-opacity="0.3" stroke-width="1"/><path d="M159.28 99 V165" stroke="#5c5ca0" stroke-opacity="0.3" stroke-width="1"/><path d="M272.07 99 V165" stroke="#5c5ca0" stroke-opacity="0.3" stroke-width="1"/><path d="M359.56 99 V165" stroke="#5c5ca0" stroke-opacity="0.3" stroke-width="1"/><path d="M431.05 99 V165" stroke="#5c5ca0" stroke-opacity="0.3" stroke-width="1"/><path d="M0 148.96 H581.8" stroke="#6a6aa4" stroke-opacity="0.22" stroke-width="1"/><path d="M0 132.92 H581.8" stroke="#6a6aa4" stroke-opacity="0.22" stroke-width="1"/><path d="M0 116.87 H581.8" stroke="#6a6aa4" stroke-opacity="0.22" stroke-width="1"/><path d="M0 100.83 H581.8" stroke="#6a6aa4" stroke-opacity="0.22" stroke-width="1"/><path d="M0 84.79 H581.8" stroke="#6a6aa4" stroke-opacity="0.22" stroke-width="1"/><path d="M0.00 101.51 L3.50 102.38 L7.00 102.61 L10.50 102.51 L14.00 102.94 L17.50 103.11 L21.00 103.49 L24.50 103.17 L28.00 102.53 L31.50 103.10 L35.00 103.93 L38.50 103.77 L42.00 104.20 L45.50 103.75 L49.00 104.30 L52.50 104.73 L56.00 104.55 L59.50 105.42 L63.00 105.70 L66.50 105.32 L70.00 105.63 L73.50 106.30 L77.00 106.79 L80.50 106.51 L84.00 106.55 L87.50 106.87 L91.00 106.68 L94.50 106.95 L98.00 107.25 L101.50 107.42 L105.00 107.33 L108.50 107.47 L112.00 107.62 L115.50 107.97 L119.00 107.99 L122.50 107.93 L126.00 108.74 L129.50 108.62 L133.00 108.78 L136.50 108.51 L140.00 109.25 L143.50 109.11 L147.00 108.38 L150.50 108.41 L154.00 108.58 L157.50 108.44 L161.00 108.72 L164.50 108.64 L168.00 109.22 L171.50 109.23 L175.00 109.08 L178.50 109.45 L182.00 109.81 L185.50 109.81 L189.00 109.56 L192.50 109.66 L196.00 109.24 L199.50 109.44 L203.00 109.91 L206.50 109.63 L210.00 109.74 L213.50 110.36 L217.00 110.78 L220.50 110.90 L224.00 110.80 L227.50 110.99 L231.00 111.18 L234.50 111.52 L238.00 111.43 L241.50 111.44 L245.00 111.64 L248.50 111.51 L252.00 111.87 L255.50 112.75 L259.00 113.57 L262.50 113.95 L266.00 114.85 L269.50 116.16 L275.50 118.96 L281.50 122.27 L287.50 125.72 L293.50 129.17 L299.50 132.18 L305.50 134.76 L311.50 136.51 L317.50 137.34 L323.50 136.79 L329.50 135.34 L335.50 133.58 L341.50 131.83 L347.50 130.25 L353.50 128.67 L359.50 127.11 L365.50 125.76 L371.50 124.40 L377.50 123.05 L383.50 121.70 L389.50 120.47 L395.50 119.36 L401.50 118.26 L407.50 117.16 L413.50 116.05 L419.50 114.95 L425.50 113.85 L431.50 112.76 L437.50 111.74 L443.50 110.72 L449.50 109.70 L455.50 108.69 L461.50 107.67 L467.50 106.64 L473.50 105.60 L479.50 104.56 L485.50 103.52 L491.50 102.48 L497.50 101.46 L503.50 100.50 L509.50 99.54 L515.50 98.58 L521.50 97.62 L527.50 96.66 L533.50 95.70 L539.50 94.79 L545.50 93.95 L551.50 93.11 L557.50 92.32 L563.50 91.78 L569.50 91.46 L575.50 91.71 L581.00 92.60" fill="none" stroke="#22224e" stroke-width="0.9"/><path d="M581.8 0.5 H0.5 V164.5 H581.8" fill="none" stroke="#2a2a2a" stroke-width="1"/></g></svg><div class="a" style="left:30.2px;top:102.2px;width:3.2px;height:0.9px;background:#3a3a3a"></div><span class="t" style="left:26.2px;top:99.00px;font-size:7.6px;color:#242424;transform:scaleX(0.803);">0</span><div class="a" style="left:30.2px;top:138.867px;width:3.2px;height:0.9px;background:#3a3a3a"></div><span class="t" style="left:20px;top:136.00px;font-size:7.6px;color:#242424;transform:scaleX(0.874);">-32</span><div class="a" style="left:30.2px;top:170.95px;width:3.2px;height:0.9px;background:#3a3a3a"></div><span class="t" style="left:20px;top:168.00px;font-size:7.6px;color:#242424;transform:scaleX(0.874);">-60</span><div class="a" style="left:30.2px;top:203.033px;width:3.2px;height:0.9px;background:#3a3a3a"></div><span class="t" style="left:20px;top:200.00px;font-size:7.6px;color:#242424;transform:scaleX(0.874);">-88</span><div class="a" style="left:30.2px;top:235.117px;width:3.2px;height:0.9px;background:#3a3a3a"></div><span class="t" style="left:16.2px;top:232.00px;font-size:7.6px;color:#242424;transform:scaleX(0.915);">-116</span><div class="a" style="left:30.2px;top:267.2px;width:3.2px;height:0.9px;background:#3a3a3a"></div><span class="t" style="left:16.2px;top:264.00px;font-size:7.6px;color:#242424;transform:scaleX(0.881);">-144</span><span class="t" style="left:5px;top:264.00px;font-size:7.6px;color:#242424;transform:scaleX(0.839);">dB</span><span class="t" style="left:23px;top:273.00px;font-size:7.6px;color:#242424;transform:scaleX(0.930);">10,000</span><div class="a" style="left:33px;top:267.4px;width:0.9px;height:2.5px;background:#3a3a3a"></div><span class="t" style="left:94.4849px;top:273.00px;font-size:7.6px;color:#242424;transform:scaleX(0.930);">12,000</span><div class="a" style="left:104.485px;top:267.4px;width:0.9px;height:2.5px;background:#3a3a3a"></div><span class="t" style="left:181.975px;top:273.00px;font-size:7.6px;color:#242424;transform:scaleX(0.930);">15,000</span><div class="a" style="left:191.975px;top:267.4px;width:0.9px;height:2.5px;background:#3a3a3a"></div><span class="t" style="left:294.77px;top:273.00px;font-size:7.6px;color:#242424;transform:scaleX(0.930);">20,000</span><div class="a" style="left:304.77px;top:267.4px;width:0.9px;height:2.5px;background:#3a3a3a"></div><span class="t" style="left:382.261px;top:273.00px;font-size:7.6px;color:#242424;transform:scaleX(0.930);">25,000</span><div class="a" style="left:392.261px;top:267.4px;width:0.9px;height:2.5px;background:#3a3a3a"></div><span class="t" style="left:453.746px;top:273.00px;font-size:7.6px;color:#242424;transform:scaleX(0.930);">30,000</span><div class="a" style="left:463.746px;top:267.4px;width:0.9px;height:2.5px;background:#3a3a3a"></div><span class="t" style="left:604.4px;top:273.00px;font-size:7.6px;color:#242424;transform:scaleX(0.930);">44,100</span><div class="a" style="left:614.8px;top:267.4px;width:0.9px;height:2.5px;background:#3a3a3a"></div><span class="t" style="left:630.2px;top:273.00px;font-size:7.6px;color:#242424;transform:scaleX(0.819);">Hz</span><span class="t" style="left:617.4px;top:103.00px;font-size:7.6px;color:#242424;transform:scaleX(0.836);">Left</span><div class="a" style="left:2.9px;top:111.4px;width:1.2px;height:149px;background:#686868"></div><div class="a" style="left:4.1px;top:111.4px;width:0.6px;height:149px;background:#e2dfd9"></div><div class="a" style="left:0.4px;top:102.4px;width:6.8px;height:9.8px;background:linear-gradient(180deg,#fafafa,#b0b0b0);border:1px solid #4a4a4a;border-radius:1.2px"></div><div class="a" style="left:36.7px;top:284.7px;width:575.3px;height:1.3px;background:#686868"></div><div class="a" style="left:36.7px;top:286px;width:575.3px;height:0.6px;background:#e2dfd9"></div><div class="a" style="left:608px;top:280.9px;width:7.2px;height:8.9px;background:linear-gradient(180deg,#fafafa,#b4b4b4);border:1px solid #4a4a4a;border-radius:1px"></div><svg class="a" style="left:33px;top:305px" width="583" height="165" viewBox="0 0 583 165" ><g transform="translate(0.40 0.00)"><rect x="0" y="0" width="581.8" height="164.4" fill="#fff"/><path d="M0 148.42 H581.8" stroke="#2c2c2c" stroke-width="1.1"/><path d="M0 132.43 H581.8" stroke="#2c2c2c" stroke-width="1.1"/><path d="M0 116.45 H581.8" stroke="#2c2c2c" stroke-width="1.1"/><path d="M0 100.47 H581.8" stroke="#2c2c2c" stroke-width="1.1"/><path d="M0 84.48 H581.8" stroke="#2c2c2c" stroke-width="1.1"/><path d="M0 68.50 H581.8" stroke="#2c2c2c" stroke-width="1.1"/><path d="M0 52.52 H581.8" stroke="#2c2c2c" stroke-width="1.1"/><path d="M0 36.53 H581.8" stroke="#2c2c2c" stroke-width="1.1"/><path d="M0 20.05 H581.8" stroke="#2c2c2c" stroke-width="1.1"/><path d="M71.78 0 V164.4" stroke="#2e2e2e" stroke-width="1"/><path d="M159.28 0 V164.4" stroke="#2e2e2e" stroke-width="1"/><path d="M272.07 0 V164.4" stroke="#2e2e2e" stroke-width="1"/><path d="M359.56 0 V164.4" stroke="#2e2e2e" stroke-width="1"/><path d="M431.05 0 V164.4" stroke="#2e2e2e" stroke-width="1"/><path d="M581.3 0 V164.4" stroke="#7e7e7e" stroke-width="1"/><path d="M0 164.4 L0.00 103.16 L3.50 103.13 L7.00 103.63 L10.50 103.28 L14.00 103.69 L17.50 103.57 L21.00 103.34 L24.50 103.43 L28.00 102.94 L31.50 103.46 L35.00 103.34 L38.50 103.52 L42.00 103.95 L45.50 104.43 L49.00 104.06 L52.50 104.35 L56.00 104.88 L59.50 105.44 L63.00 105.45 L66.50 105.63 L70.00 106.40 L73.50 105.92 L77.00 106.73 L80.50 106.45 L84.00 106.50 L87.50 106.64 L91.00 106.91 L94.50 107.44 L98.00 107.05 L101.50 107.49 L105.00 107.66 L108.50 107.59 L112.00 107.89 L115.50 107.66 L119.00 107.81 L122.50 108.09 L126.00 108.62 L129.50 108.52 L133.00 108.53 L136.50 108.84 L140.00 108.82 L143.50 108.71 L147.00 109.05 L150.50 108.91 L154.00 108.49 L157.50 108.69 L161.00 108.70 L164.50 109.12 L168.00 109.05 L171.50 108.60 L175.00 109.06 L178.50 108.28 L182.00 108.46 L185.50 108.90 L189.00 108.58 L192.50 109.02 L196.00 108.83 L199.50 109.49 L203.00 109.74 L206.50 109.75 L210.00 110.30 L213.50 110.17 L217.00 110.77 L220.50 110.83 L224.00 110.95 L227.50 111.00 L231.00 111.44 L234.50 111.64 L238.00 111.39 L241.50 111.65 L245.00 111.29 L248.50 112.04 L252.00 112.35 L255.50 112.97 L259.00 113.42 L262.50 113.69 L266.00 114.83 L269.50 116.14 L275.50 118.93 L281.50 122.22 L287.50 125.66 L293.50 129.10 L299.50 132.10 L305.50 134.67 L311.50 136.41 L317.50 137.24 L323.50 136.69 L329.50 135.24 L335.50 133.50 L341.50 131.75 L347.50 130.17 L353.50 128.60 L359.50 127.05 L365.50 125.70 L371.50 124.35 L377.50 123.00 L383.50 121.65 L389.50 120.43 L395.50 119.33 L401.50 118.23 L407.50 117.13 L413.50 116.03 L419.50 114.93 L425.50 113.83 L431.50 112.75 L437.50 111.74 L443.50 110.72 L449.50 109.70 L455.50 108.69 L461.50 107.67 L467.50 106.65 L473.50 105.62 L479.50 104.58 L485.50 103.55 L491.50 102.51 L497.50 101.49 L503.50 100.53 L509.50 99.57 L515.50 98.62 L521.50 97.66 L527.50 96.70 L533.50 95.75 L539.50 94.85 L545.50 94.01 L551.50 93.17 L557.50 92.38 L563.50 91.84 L569.50 91.52 L575.50 91.77 L581.00 92.66 L581.8 164.4 Z" fill="#8080b3"/><path d="M71.78 98.64 V164.4" stroke="#5c5ca0" stroke-opacity="0.3" stroke-width="1"/><path d="M159.28 98.64 V164.4" stroke="#5c5ca0" stroke-opacity="0.3" stroke-width="1"/><path d="M272.07 98.64 V164.4" stroke="#5c5ca0" stroke-opacity="0.3" stroke-width="1"/><path d="M359.56 98.64 V164.4" stroke="#5c5ca0" stroke-opacity="0.3" stroke-width="1"/><path d="M431.05 98.64 V164.4" stroke="#5c5ca0" stroke-opacity="0.3" stroke-width="1"/><path d="M0 148.42 H581.8" stroke="#6a6aa4" stroke-opacity="0.22" stroke-width="1"/><path d="M0 132.43 H581.8" stroke="#6a6aa4" stroke-opacity="0.22" stroke-width="1"/><path d="M0 116.45 H581.8" stroke="#6a6aa4" stroke-opacity="0.22" stroke-width="1"/><path d="M0 100.47 H581.8" stroke="#6a6aa4" stroke-opacity="0.22" stroke-width="1"/><path d="M0 84.48 H581.8" stroke="#6a6aa4" stroke-opacity="0.22" stroke-width="1"/><path d="M0.00 103.16 L3.50 103.13 L7.00 103.63 L10.50 103.28 L14.00 103.69 L17.50 103.57 L21.00 103.34 L24.50 103.43 L28.00 102.94 L31.50 103.46 L35.00 103.34 L38.50 103.52 L42.00 103.95 L45.50 104.43 L49.00 104.06 L52.50 104.35 L56.00 104.88 L59.50 105.44 L63.00 105.45 L66.50 105.63 L70.00 106.40 L73.50 105.92 L77.00 106.73 L80.50 106.45 L84.00 106.50 L87.50 106.64 L91.00 106.91 L94.50 107.44 L98.00 107.05 L101.50 107.49 L105.00 107.66 L108.50 107.59 L112.00 107.89 L115.50 107.66 L119.00 107.81 L122.50 108.09 L126.00 108.62 L129.50 108.52 L133.00 108.53 L136.50 108.84 L140.00 108.82 L143.50 108.71 L147.00 109.05 L150.50 108.91 L154.00 108.49 L157.50 108.69 L161.00 108.70 L164.50 109.12 L168.00 109.05 L171.50 108.60 L175.00 109.06 L178.50 108.28 L182.00 108.46 L185.50 108.90 L189.00 108.58 L192.50 109.02 L196.00 108.83 L199.50 109.49 L203.00 109.74 L206.50 109.75 L210.00 110.30 L213.50 110.17 L217.00 110.77 L220.50 110.83 L224.00 110.95 L227.50 111.00 L231.00 111.44 L234.50 111.64 L238.00 111.39 L241.50 111.65 L245.00 111.29 L248.50 112.04 L252.00 112.35 L255.50 112.97 L259.00 113.42 L262.50 113.69 L266.00 114.83 L269.50 116.14 L275.50 118.93 L281.50 122.22 L287.50 125.66 L293.50 129.10 L299.50 132.10 L305.50 134.67 L311.50 136.41 L317.50 137.24 L323.50 136.69 L329.50 135.24 L335.50 133.50 L341.50 131.75 L347.50 130.17 L353.50 128.60 L359.50 127.05 L365.50 125.70 L371.50 124.35 L377.50 123.00 L383.50 121.65 L389.50 120.43 L395.50 119.33 L401.50 118.23 L407.50 117.13 L413.50 116.03 L419.50 114.93 L425.50 113.83 L431.50 112.75 L437.50 111.74 L443.50 110.72 L449.50 109.70 L455.50 108.69 L461.50 107.67 L467.50 106.65 L473.50 105.62 L479.50 104.58 L485.50 103.55 L491.50 102.51 L497.50 101.49 L503.50 100.53 L509.50 99.57 L515.50 98.62 L521.50 97.66 L527.50 96.70 L533.50 95.75 L539.50 94.85 L545.50 94.01 L551.50 93.17 L557.50 92.38 L563.50 91.84 L569.50 91.52 L575.50 91.77 L581.00 92.66" fill="none" stroke="#22224e" stroke-width="0.9"/><path d="M581.8 0.5 H0.5 V163.9 H581.8" fill="none" stroke="#2a2a2a" stroke-width="1"/></g></svg><div class="a" style="left:30.2px;top:304.8px;width:3.2px;height:0.9px;background:#3a3a3a"></div><span class="t" style="left:26.2px;top:302.00px;font-size:7.6px;color:#242424;transform:scaleX(0.803);">0</span><div class="a" style="left:30.2px;top:341.333px;width:3.2px;height:0.9px;background:#3a3a3a"></div><span class="t" style="left:20px;top:338.00px;font-size:7.6px;color:#242424;transform:scaleX(0.874);">-32</span><div class="a" style="left:30.2px;top:373.3px;width:3.2px;height:0.9px;background:#3a3a3a"></div><span class="t" style="left:20px;top:370.00px;font-size:7.6px;color:#242424;transform:scaleX(0.874);">-60</span><div class="a" style="left:30.2px;top:405.267px;width:3.2px;height:0.9px;background:#3a3a3a"></div><span class="t" style="left:20px;top:402.00px;font-size:7.6px;color:#242424;transform:scaleX(0.874);">-88</span><div class="a" style="left:30.2px;top:437.233px;width:3.2px;height:0.9px;background:#3a3a3a"></div><span class="t" style="left:16.2px;top:434.00px;font-size:7.6px;color:#242424;transform:scaleX(0.915);">-116</span><div class="a" style="left:30.2px;top:469.2px;width:3.2px;height:0.9px;background:#3a3a3a"></div><span class="t" style="left:16.2px;top:466.00px;font-size:7.6px;color:#242424;transform:scaleX(0.881);">-144</span><span class="t" style="left:5px;top:466.00px;font-size:7.6px;color:#242424;transform:scaleX(0.839);">dB</span><span class="t" style="left:23px;top:475.00px;font-size:7.6px;color:#242424;transform:scaleX(0.930);">10,000</span><div class="a" style="left:33px;top:469.4px;width:0.9px;height:2.5px;background:#3a3a3a"></div><span class="t" style="left:94.4849px;top:475.00px;font-size:7.6px;color:#242424;transform:scaleX(0.930);">12,000</span><div class="a" style="left:104.485px;top:469.4px;width:0.9px;height:2.5px;background:#3a3a3a"></div><span class="t" style="left:181.975px;top:475.00px;font-size:7.6px;color:#242424;transform:scaleX(0.930);">15,000</span><div class="a" style="left:191.975px;top:469.4px;width:0.9px;height:2.5px;background:#3a3a3a"></div><span class="t" style="left:294.77px;top:475.00px;font-size:7.6px;color:#242424;transform:scaleX(0.930);">20,000</span><div class="a" style="left:304.77px;top:469.4px;width:0.9px;height:2.5px;background:#3a3a3a"></div><span class="t" style="left:382.261px;top:475.00px;font-size:7.6px;color:#242424;transform:scaleX(0.930);">25,000</span><div class="a" style="left:392.261px;top:469.4px;width:0.9px;height:2.5px;background:#3a3a3a"></div><span class="t" style="left:453.746px;top:475.00px;font-size:7.6px;color:#242424;transform:scaleX(0.930);">30,000</span><div class="a" style="left:463.746px;top:469.4px;width:0.9px;height:2.5px;background:#3a3a3a"></div><span class="t" style="left:604.4px;top:475.00px;font-size:7.6px;color:#242424;transform:scaleX(0.930);">44,100</span><div class="a" style="left:614.8px;top:469.4px;width:0.9px;height:2.5px;background:#3a3a3a"></div><span class="t" style="left:630.2px;top:475.00px;font-size:7.6px;color:#242424;transform:scaleX(0.819);">Hz</span><span class="t" style="left:617.4px;top:305.00px;font-size:7.6px;color:#242424;transform:scaleX(0.863);">Right</span><div class="a" style="left:2.9px;top:314px;width:1.2px;height:148.4px;background:#686868"></div><div class="a" style="left:4.1px;top:314px;width:0.6px;height:148.4px;background:#e2dfd9"></div><div class="a" style="left:0.4px;top:305px;width:6.8px;height:9.8px;background:linear-gradient(180deg,#fafafa,#b0b0b0);border:1px solid #4a4a4a;border-radius:1.2px"></div><div class="a" style="left:36.7px;top:486.7px;width:575.3px;height:1.3px;background:#686868"></div><div class="a" style="left:36.7px;top:488px;width:575.3px;height:0.6px;background:#e2dfd9"></div><div class="a" style="left:608px;top:482.9px;width:7.2px;height:8.9px;background:linear-gradient(180deg,#fafafa,#b4b4b4);border:1px solid #4a4a4a;border-radius:1px"></div><div class="a" style="left:1px;top:498px;width:121.4px;height:81.6px;border:1px solid;border-color:#55524c #f4f2ee #f4f2ee #55524c;background:#d4d0c8"></div><span class="t" style="left:3px;top:503.00px;font-size:7.8px;color:#242424;transform:scaleX(0.948);">Frequency (Hz):</span><span class="t" style="left:3px;top:512.00px;font-size:7.8px;color:#242424;transform:scaleX(0.948);">Decibels (dB):</span><span class="t" style="left:3px;top:521.00px;font-size:7.8px;color:#242424;transform:scaleX(0.928);">FFT Bin:</span><span class="t" style="left:3px;top:530.00px;font-size:7.8px;color:#242424;transform:scaleX(0.932);">Peak:</span><div class="a" style="left:122.4px;top:498px;width:516px;height:81.6px;background:#fff;border:1px solid;border-color:#33312d #4c4a45 #4c4a45 #33312d"></div><div class="a" style="left:123.2px;top:499px;width:53px;height:11.6px;background:#d4d0c8;border:1px solid;border-color:#fbfaf7 #6c6962 #6c6962 #fbfaf7"></div><div class="a" style="left:176.2px;top:499px;width:138.4px;height:11.6px;background:#d4d0c8;border:1px solid;border-color:#fbfaf7 #6c6962 #6c6962 #fbfaf7"></div><div class="a" style="left:314.6px;top:499px;width:48.2px;height:11.6px;background:#d4d0c8;border:1px solid;border-color:#fbfaf7 #6c6962 #6c6962 #fbfaf7"></div><div class="a" style="left:362.8px;top:499px;width:49.6px;height:11.6px;background:#d4d0c8;border:1px solid;border-color:#fbfaf7 #6c6962 #6c6962 #fbfaf7"></div><div class="a" style="left:412.4px;top:499px;width:115px;height:11.6px;background:#d4d0c8;border:1px solid;border-color:#fbfaf7 #6c6962 #6c6962 #fbfaf7"></div><div class="a" style="left:527.4px;top:499px;width:110.2px;height:11.6px;background:#d4d0c8;border:1px solid;border-color:#fbfaf7 #6c6962 #6c6962 #fbfaf7"></div><span class="t" style="left:239.3px;top:501.00px;font-size:7.8px;color:#242424;transform:scaleX(0.827);">File</span><span class="t" style="left:331.1px;top:501.00px;font-size:7.8px;color:#242424;transform:scaleX(0.887);">Start</span><span class="t" style="left:381.9px;top:501.00px;font-size:7.8px;color:#242424;transform:scaleX(0.822);">End</span><span class="t" style="left:457.4px;top:501.00px;font-size:7.8px;color:#242424;transform:scaleX(0.908);">Settings</span><span class="t" style="left:575.1px;top:501.00px;font-size:7.8px;color:#242424;transform:scaleX(0.844);">Peak</span><div class="a" style="left:123.2px;top:510.6px;width:514.4px;height:11.12px;background:#8080b3"></div><div class="a" style="left:123.2px;top:521.32px;width:514.2px;height:0.9px;background:#dedee8"></div><div class="a" style="left:123.2px;top:532.44px;width:514.2px;height:0.9px;background:#dedee8"></div><div class="a" style="left:123.2px;top:543.56px;width:514.2px;height:0.9px;background:#dedee8"></div><div class="a" style="left:123.2px;top:554.68px;width:514.2px;height:0.9px;background:#dedee8"></div><div class="a" style="left:123.2px;top:565.8px;width:514.2px;height:0.9px;background:#dedee8"></div><div class="a" style="left:123.2px;top:576.4px;width:514.2px;height:0.8px;background:#b8b8bc"></div><div class="a" style="left:175.8px;top:521.72px;width:0.9px;height:56.88px;background:#dedee8"></div><div class="a" style="left:175.8px;top:510.6px;width:0.9px;height:11.12px;background:#9c9ccc"></div><div class="a" style="left:314.2px;top:521.72px;width:0.9px;height:56.88px;background:#dedee8"></div><div class="a" style="left:314.2px;top:510.6px;width:0.9px;height:11.12px;background:#9c9ccc"></div><div class="a" style="left:362.4px;top:521.72px;width:0.9px;height:56.88px;background:#dedee8"></div><div class="a" style="left:362.4px;top:510.6px;width:0.9px;height:11.12px;background:#9c9ccc"></div><div class="a" style="left:412px;top:521.72px;width:0.9px;height:56.88px;background:#dedee8"></div><div class="a" style="left:412px;top:510.6px;width:0.9px;height:11.12px;background:#9c9ccc"></div><div class="a" style="left:527px;top:521.72px;width:0.9px;height:56.88px;background:#dedee8"></div><div class="a" style="left:527px;top:510.6px;width:0.9px;height:11.12px;background:#9c9ccc"></div><span class="t" style="left:125.2px;top:513.00px;font-size:7.8px;color:#181838;transform:scaleX(0.957);">Active:</span><span class="t" style="left:178.6px;top:513.00px;font-size:7.8px;color:#181838;transform:scaleX(0.935);">HD028947757214.wav</span><span class="t" style="left:316px;top:513.00px;font-size:7.8px;color:#181838;transform:scaleX(0.988);">00:00:00.000</span><span class="t" style="left:365.6px;top:513.00px;font-size:7.8px;color:#181838;transform:scaleX(0.988);">00:57:27.638</span><span class="t" style="left:422.4px;top:513.00px;font-size:7.8px;color:#181838;transform:scaleX(0.955);">2,048, Blackman-Harris,75%</span><span class="t" style="left:556px;top:513.00px;font-size:7.8px;color:#181838;transform:scaleX(0.926);">-41 dB at 302 Hz</span><span class="t" style="left:125.2px;top:524.00px;font-size:7.8px;color:#242424;transform:scaleX(0.984);">Snapshot #1:</span><span class="t" style="left:125.2px;top:535.00px;font-size:7.8px;color:#242424;transform:scaleX(0.984);">Snapshot #2:</span><span class="t" style="left:125.2px;top:546.00px;font-size:7.8px;color:#242424;transform:scaleX(0.984);">Snapshot #3:</span><span class="t" style="left:125.2px;top:557.00px;font-size:7.8px;color:#242424;transform:scaleX(0.984);">Snapshot #4:</span><div class="a" style="left:0px;top:585.2px;width:750px;height:0.8px;background:#f6f4f0"></div><span class="t" style="left:3px;top:589.00px;font-size:8.2px;color:#242424;transform:scaleX(0.918);">Processing time (Spectrum Analysis): 3 minute(s) 24.078 seconds</span><div class="a" style="left:536.6px;top:587.2px;width:41.6px;height:12.2px;border:1px solid;border-color:#a8a49c #f4f2ee #f4f2ee #a8a49c"></div><span class="t" style="left:542.2px;top:590.00px;font-size:8.2px;color:#242424;transform:scaleX(0.868);">88,200 Hz</span><div class="a" style="left:580.2px;top:587.2px;width:25.2px;height:12.2px;border:1px solid;border-color:#a8a49c #f4f2ee #f4f2ee #a8a49c"></div><span class="t" style="left:584.4px;top:590.00px;font-size:8.2px;color:#242424;transform:scaleX(0.879);">24 bit</span><div class="a" style="left:608px;top:587.2px;width:30.4px;height:12.2px;border:1px solid;border-color:#a8a49c #f4f2ee #f4f2ee #a8a49c"></div><span class="t" style="left:612.8px;top:590.00px;font-size:8.2px;color:#242424;transform:scaleX(0.920);">Stereo</span><div class="a" style="left:640.6px;top:587.2px;width:52.4px;height:12.2px;border:1px solid;border-color:#a8a49c #f4f2ee #f4f2ee #a8a49c"></div><span class="t" style="left:645.6px;top:590.00px;font-size:8.2px;color:#242424;transform:scaleX(0.929);">00:57:27.638</span><div class="a" style="left:696px;top:587.2px;width:54px;height:12.2px;border:1px solid;border-color:#a8a49c #f4f2ee #f4f2ee #a8a49c"></div><span class="t" style="left:700px;top:590.00px;font-size:8.2px;color:#242424;transform:scaleX(0.887);">248,217.4 MB</span><div class="a" style="left:639px;top:63px;width:1px;height:523px;background:#f2f0ea"></div><div class="a" style="left:641px;top:64.5px;width:67px;height:6.7px;background:#0a246a"></div><div class="a" style="left:641px;top:71.2px;width:67px;height:0.8px;background:#f6f4f0"></div><div class="a" style="left:641px;top:72px;width:67px;height:26.4px;background:#d9d6cf"></div><div class="a" style="left:641.6px;top:82px;width:57.8px;height:4.7px;background:#8e8e8e"></div><svg class="a" style="left:640px;top:81px" width="9" height="7" viewBox="0 0 9 7" ><g transform="translate(0.50 0.50)"><path d="M0.5 0.5 H4.5 L0.5 5 Z" fill="#f4f000" stroke="#a8a400" stroke-width="0.4"/></g></svg><svg class="a" style="left:695px;top:81px" width="8" height="7" viewBox="0 0 8 7" ><g transform="translate(0.00 0.50)"><path d="M5 0.5 H1 L5 5 Z" fill="#f4f000" stroke="#a8a400" stroke-width="0.4"/></g></svg><span class="t" style="left:642.7px;top:90.00px;font-size:7.8px;color:#453850;transform:scaleX(0.932);">00:00:00</span><div class="a" style="left:641px;top:98.4px;width:67px;height:0.8px;background:#8c8880"></div><div class="a" style="left:671.2px;top:97px;width:0.8px;height:2px;background:#222"></div><div class="a" style="left:702px;top:97px;width:0.8px;height:2px;background:#222"></div><svg class="a" style="left:641px;top:99px" width="59" height="455" viewBox="0 0 59 455" ><g transform="translate(0.00 0.20)"><defs><linearGradient id="gd" x1="0" y1="0" x2="0" y2="1"><stop offset="0" stop-color="#00001c" stop-opacity="1"/><stop offset="0.5" stop-color="#000030" stop-opacity="0.55"/><stop offset="1" stop-color="#000060" stop-opacity="0"/></linearGradient><linearGradient id="gu" x1="0" y1="1" x2="0" y2="0"><stop offset="0" stop-color="#000010" stop-opacity="1"/><stop offset="0.45" stop-color="#000030" stop-opacity="0.6"/><stop offset="1" stop-color="#000060" stop-opacity="0"/></linearGradient><linearGradient id="gc" x1="0" y1="0" x2="0" y2="1"><stop offset="0" stop-color="#000060" stop-opacity="0"/><stop offset="0.5" stop-color="#00001c" stop-opacity="0.95"/><stop offset="1" stop-color="#000060" stop-opacity="0"/></linearGradient><linearGradient id="gt" x1="0" y1="0" x2="0" y2="1"><stop offset="0" stop-color="#000030" stop-opacity="0.95"/><stop offset="0.7" stop-color="#000050" stop-opacity="0.7"/><stop offset="1" stop-color="#000080" stop-opacity="0"/></linearGradient></defs><rect width="58.6" height="454.4" fill="#0000c6"/><rect x="2.5" y="0.0" width="1.2" height="22.6" fill="url(#gt)" opacity="0.35"/><rect x="4.4" y="0.0" width="1.4" height="34.6" fill="url(#gt)" opacity="0.6"/><rect x="6.6" y="0.0" width="1.0" height="29.8" fill="url(#gt)" opacity="0.45"/><rect x="8.4" y="0.0" width="1.6" height="37.0" fill="url(#gt)" opacity="0.55"/><rect x="11.0" y="0.0" width="1.0" height="21.4" fill="url(#gt)" opacity="0.3"/><rect x="14.4" y="0.0" width="1.8" height="56.2" fill="url(#gt)" opacity="0.7"/><rect x="16.6" y="0.0" width="2.6" height="64.6" fill="url(#gt)" opacity="0.85"/><rect x="19.6" y="0.0" width="1.2" height="46.6" fill="url(#gt)" opacity="0.5"/><rect x="22.5" y="0.0" width="1.0" height="20.2" fill="url(#gt)" opacity="0.25"/><rect x="26.0" y="0.0" width="1.0" height="15.4" fill="url(#gt)" opacity="0.2"/><rect x="31.0" y="0.0" width="1.0" height="17.8" fill="url(#gt)" opacity="0.25"/><rect x="35.0" y="0.0" width="1.0" height="22.6" fill="url(#gt)" opacity="0.3"/><rect x="37.4" y="0.0" width="1.6" height="35.8" fill="url(#gt)" opacity="0.6"/><rect x="39.6" y="0.0" width="1.4" height="32.2" fill="url(#gt)" opacity="0.5"/><rect x="42.4" y="0.0" width="1.0" height="22.6" fill="url(#gt)" opacity="0.3"/><rect x="44.4" y="0.0" width="1.6" height="29.8" fill="url(#gt)" opacity="0.5"/><rect x="46.6" y="0.0" width="1.0" height="25.0" fill="url(#gt)" opacity="0.4"/><rect x="49.6" y="0.0" width="1.0" height="16.6" fill="url(#gt)" opacity="0.25"/><rect x="52.8" y="0.0" width="1.4" height="22.6" fill="url(#gt)" opacity="0.5"/><rect x="55.4" y="0.0" width="1.0" height="15.4" fill="url(#gt)" opacity="0.3"/><rect x="1.6" y="205.4" width="1.0" height="22.0" fill="url(#gu)" opacity="0.28"/><rect x="1.6" y="227.4" width="1.0" height="20.0" fill="url(#gd)" opacity="0.28"/><rect x="4.2" y="181.4" width="1.2" height="46.0" fill="url(#gu)" opacity="0.48"/><rect x="4.2" y="227.4" width="1.2" height="52.0" fill="url(#gd)" opacity="0.48"/><rect x="6.7" y="187.4" width="1.0" height="40.0" fill="url(#gu)" opacity="0.4"/><rect x="6.7" y="227.4" width="1.0" height="38.0" fill="url(#gd)" opacity="0.4"/><rect x="9.4" y="175.4" width="1.4" height="52.0" fill="url(#gu)" opacity="0.52"/><rect x="9.4" y="227.4" width="1.4" height="58.0" fill="url(#gd)" opacity="0.52"/><rect x="11.4" y="193.4" width="1.0" height="34.0" fill="url(#gu)" opacity="0.32"/><rect x="11.4" y="227.4" width="1.0" height="30.0" fill="url(#gd)" opacity="0.32"/><rect x="14.0" y="197.4" width="1.0" height="30.0" fill="url(#gu)" opacity="0.28"/><rect x="14.0" y="227.4" width="1.0" height="26.0" fill="url(#gd)" opacity="0.28"/><rect x="16.4" y="177.4" width="2.8" height="50.0" fill="url(#gu)" opacity="0.72"/><rect x="16.4" y="227.4" width="2.8" height="104.0" fill="url(#gd)" opacity="0.72"/><rect x="19.6" y="185.4" width="1.0" height="42.0" fill="url(#gu)" opacity="0.4"/><rect x="19.6" y="227.4" width="1.0" height="70.0" fill="url(#gd)" opacity="0.4"/><rect x="23.0" y="209.4" width="1.0" height="18.0" fill="url(#gu)" opacity="0.2"/><rect x="23.0" y="227.4" width="1.0" height="16.0" fill="url(#gd)" opacity="0.2"/><rect x="27.5" y="203.4" width="1.0" height="24.0" fill="url(#gu)" opacity="0.2"/><rect x="27.5" y="227.4" width="1.0" height="20.0" fill="url(#gd)" opacity="0.2"/><rect x="32.0" y="207.4" width="1.0" height="20.0" fill="url(#gu)" opacity="0.2"/><rect x="32.0" y="227.4" width="1.0" height="22.0" fill="url(#gd)" opacity="0.2"/><rect x="37.8" y="187.4" width="1.2" height="40.0" fill="url(#gu)" opacity="0.4"/><rect x="37.8" y="227.4" width="1.2" height="44.0" fill="url(#gd)" opacity="0.4"/><rect x="41.0" y="197.4" width="1.0" height="30.0" fill="url(#gu)" opacity="0.24"/><rect x="41.0" y="227.4" width="1.0" height="26.0" fill="url(#gd)" opacity="0.24"/><rect x="44.0" y="181.4" width="1.2" height="46.0" fill="url(#gu)" opacity="0.44"/><rect x="44.0" y="227.4" width="1.2" height="50.0" fill="url(#gd)" opacity="0.44"/><rect x="48.5" y="171.4" width="1.4" height="56.0" fill="url(#gu)" opacity="0.52"/><rect x="48.5" y="227.4" width="1.4" height="70.0" fill="url(#gd)" opacity="0.52"/><rect x="51.0" y="191.4" width="1.0" height="36.0" fill="url(#gu)" opacity="0.28"/><rect x="51.0" y="227.4" width="1.0" height="34.0" fill="url(#gd)" opacity="0.28"/><rect x="53.2" y="173.4" width="1.4" height="54.0" fill="url(#gu)" opacity="0.56"/><rect x="53.2" y="227.4" width="1.4" height="76.0" fill="url(#gd)" opacity="0.56"/><rect x="55.2" y="177.4" width="1.0" height="50.0" fill="url(#gu)" opacity="0.4"/><rect x="55.2" y="227.4" width="1.0" height="40.0" fill="url(#gd)" opacity="0.4"/><rect x="1.4" y="436.8" width="1.2" height="17.6" fill="url(#gu)" opacity="0.5"/><rect x="3.4" y="428.8" width="2.0" height="25.6" fill="url(#gu)" opacity="0.75"/><rect x="6.4" y="432.8" width="1.4" height="21.6" fill="url(#gu)" opacity="0.5"/><rect x="8.6" y="422.8" width="2.0" height="31.6" fill="url(#gu)" opacity="0.7"/><rect x="11.4" y="434.8" width="1.2" height="19.6" fill="url(#gu)" opacity="0.4"/><rect x="13.6" y="420.8" width="1.4" height="33.6" fill="url(#gu)" opacity="0.5"/><rect x="15.8" y="386.8" width="3.4" height="67.6" fill="url(#gu)" opacity="0.95"/><rect x="19.6" y="410.8" width="1.4" height="43.6" fill="url(#gu)" opacity="0.6"/><rect x="22.4" y="438.8" width="1.0" height="15.6" fill="url(#gu)" opacity="0.3"/><rect x="27.0" y="442.8" width="1.0" height="11.6" fill="url(#gu)" opacity="0.25"/><rect x="33.0" y="440.8" width="1.0" height="13.6" fill="url(#gu)" opacity="0.25"/><rect x="38.0" y="434.8" width="1.2" height="19.6" fill="url(#gu)" opacity="0.4"/><rect x="41.4" y="428.8" width="1.2" height="25.6" fill="url(#gu)" opacity="0.45"/><rect x="44.0" y="400.8" width="2.4" height="53.6" fill="url(#gu)" opacity="0.8"/><rect x="47.4" y="416.8" width="1.4" height="37.6" fill="url(#gu)" opacity="0.55"/><rect x="50.4" y="406.8" width="1.6" height="47.6" fill="url(#gu)" opacity="0.7"/><rect x="52.6" y="388.8" width="3.2" height="65.6" fill="url(#gu)" opacity="0.95"/><rect x="56.2" y="412.8" width="1.4" height="41.6" fill="url(#gu)" opacity="0.6"/><rect x="0" y="226.9" width="58.6" height="1" fill="#000018"/></g></svg><div class="a" style="left:699.6px;top:99.2px;width:8.1px;height:454.4px;background:#adadad"></div><div class="a" style="left:707.7px;top:64.5px;width:1.3px;height:501.5px;background:#ebe8e4"></div><div class="a" style="left:709px;top:63px;width:1.2px;height:521px;background:#bcb8b3"></div><div class="a" style="left:699.6px;top:155.6px;width:8.4px;height:0.8px;background:#c6c6c6"></div><div class="a" style="left:699.6px;top:212.2px;width:8.4px;height:1px;background:#7878d2"></div><div class="a" style="left:699.6px;top:384.4px;width:8.4px;height:0.8px;background:#c6c6c6"></div><div class="a" style="left:699.6px;top:440px;width:8.4px;height:1.2px;background:#7878d2"></div><div class="a" style="left:699.6px;top:326.1px;width:8.4px;height:1px;background:#222"></div><div class="a" style="left:641px;top:555.4px;width:11px;height:9.4px;background:#d4d0c8;border:1px solid;border-color:#f8f6f2 #6c6962 #6c6962 #f8f6f2"></div><div class="a" style="left:644.9px;top:559.6px;width:3.2px;height:1px;background:#111"></div><div class="a" style="left:646px;top:558.5px;width:1px;height:3.2px;background:#111"></div><div class="a" style="left:652px;top:555.4px;width:11.6px;height:9.4px;background:#d4d0c8;border:1px solid;border-color:#f8f6f2 #6c6962 #6c6962 #f8f6f2"></div><div class="a" style="left:656.3px;top:559.6px;width:3px;height:1px;background:#111"></div><div class="a" style="left:663.6px;top:555.4px;width:16.4px;height:9.4px;background:#d9d6cf"></div><svg class="a" style="left:671px;top:557px" width="5" height="7" viewBox="0 0 5 7" ><g transform="translate(0.60 0.40)"><path d="M0.4 0.2 L3.6 2.8 L0.4 5.4 Z" fill="#111"/></g></svg><div class="a" style="left:680px;top:555.4px;width:11px;height:9.4px;background:#d4d0c8;border:1px solid;border-color:#f8f6f2 #6c6962 #6c6962 #f8f6f2"></div><div class="a" style="left:683.9px;top:559.6px;width:3.2px;height:1px;background:#111"></div><div class="a" style="left:685px;top:558.5px;width:1px;height:3.2px;background:#111"></div><div class="a" style="left:691px;top:555.4px;width:4.6px;height:9.4px;background:#d9d6cf"></div><div class="a" style="left:695.6px;top:555.4px;width:11.4px;height:9.4px;background:#d4d0c8;border:1px solid;border-color:#f8f6f2 #6c6962 #6c6962 #f8f6f2"></div><div class="a" style="left:699.8px;top:559.6px;width:3px;height:1px;background:#111"></div><div class="a" style="left:640.4px;top:566.2px;width:69px;height:15.4px;border:1px solid;border-color:#f8f6f2 #8c8880 #8c8880 #f8f6f2"></div><svg class="a" style="left:644px;top:568px" width="12" height="13" viewBox="0 0 12 13" ><g transform="translate(0.00 0.20)"><rect x="2.4" y="2.4" width="1.4" height="7.2" fill="#8a8a8a"/><path d="M9.4 2.4 L4 6 L9.4 9.6 Z" fill="#8a8a8a"/></g></svg><svg class="a" style="left:658px;top:568px" width="12" height="13" viewBox="0 0 12 13" ><g transform="translate(0.00 0.20)"><rect x="8.2" y="2.4" width="1.4" height="7.2" fill="#8a8a8a"/><path d="M2.6 2.4 L8 6 L2.6 9.6 Z" fill="#8a8a8a"/></g></svg><svg class="a" style="left:672px;top:568px" width="12" height="13" viewBox="0 0 12 13" ><g transform="translate(0.00 0.20)"><rect x="2.6" y="2.6" width="6.8" height="6.8" fill="#8a8a8a"/></g></svg><svg class="a" style="left:685px;top:568px" width="13" height="13" viewBox="0 0 13 13" ><g transform="translate(0.80 0.60)"><path d="M2 1.4 L10.4 5.4 L2 9.4 Z" fill="#b4b4b4" stroke="#6a6a6a" stroke-width="0.9"/><path d="M6.4 10.8 H10.4" stroke="#444" stroke-width="1.2"/></g></svg><svg class="a" style="left:698px;top:568px" width="13" height="13" viewBox="0 0 13 13" ><g transform="translate(0.60 0.40)"><path d="M2.4 6 H8 M5.6 3.4 L8.4 6 L5.6 8.6" fill="none" stroke="#2a9a5a" stroke-width="1.8"/><rect x="8.6" y="2.6" width="1.6" height="7" fill="#2a9a5a"/></g></svg><div class="a" style="left:714.2px;top:67.2px;width:1.6px;height:1.6px;background:#86827b;border-radius:0.7px"></div><div class="a" style="left:717.3px;top:67.2px;width:1.6px;height:1.6px;background:#86827b;border-radius:0.7px"></div><div class="a" style="left:720.4px;top:67.2px;width:1.6px;height:1.6px;background:#86827b;border-radius:0.7px"></div><div class="a" style="left:723.5px;top:67.2px;width:1.6px;height:1.6px;background:#86827b;border-radius:0.7px"></div><div class="a" style="left:726.6px;top:67.2px;width:1.6px;height:1.6px;background:#86827b;border-radius:0.7px"></div><div class="a" style="left:729.7px;top:67.2px;width:1.6px;height:1.6px;background:#86827b;border-radius:0.7px"></div><svg class="a" style="left:743px;top:65px" width="6" height="6" viewBox="0 0 6 6" ><g transform="translate(0.00 0.00)"><path d="M1.2 1.2 L4.8 4.8 M4.8 1.2 L1.2 4.8" stroke="#4a4a4a" stroke-width="0.85"/></g></svg><div class="a" style="left:714.8px;top:75.8px;width:13.6px;height:11.2px;background:linear-gradient(135deg,#7c7ce8 0%,#4c4cd2 45%,#3434b4 100%);border:1px solid;border-color:#a4a4f0 #24248c #24248c #a4a4f0;border-radius:1px"></div><span class="t" style="left:721.6px;top:78.00px;font-size:8.4px;color:#fff;transform:scaleX(0.856);">1</span><div class="a" style="left:736.2px;top:75.8px;width:14.8px;height:11.2px;background:linear-gradient(135deg,#7c7ce8 0%,#4c4cd2 45%,#3434b4 100%);border:1px solid;border-color:#a4a4f0 #24248c #24248c #a4a4f0;border-radius:1px"></div><span class="t" style="left:743.2px;top:78.00px;font-size:8.4px;color:#fff;transform:scaleX(0.856);">2</span><span class="t" style="left:715.6px;top:89.00px;font-size:7.6px;color:#242424;transform:scaleX(0.932);">-Inf.</span><span class="t" style="left:733.4px;top:89.00px;font-size:7.6px;color:#242424;transform:scaleX(1.023);">-Inf.</span><div class="a" style="left:713.8px;top:98.7px;width:1px;height:477.9px;background:#c2beb8"></div><div class="a" style="left:730.5px;top:98.7px;width:1.4px;height:477.9px;background:#c9c9c3"></div><div class="a" style="left:714.8px;top:98.7px;width:15.7px;height:477.9px;background:linear-gradient(180deg,#7b716b 0px,#8e8780 14px,#8f8f84 30px,#84978a 55px,#7a9482 90px,#769080 150px,#769080 100%);border-top:1px solid #6a625c"></div><span class="t" style="left:724.7px;top:111.00px;font-size:7.8px;color:#e9ece8;transform:scaleX(0.829);">3</span><div class="a" style="left:728.9px;top:113.95px;width:1.4px;height:0.8px;background:#dfe4de"></div><span class="t" style="left:724.7px;top:127.00px;font-size:7.8px;color:#e9ece8;transform:scaleX(0.829);">6</span><div class="a" style="left:728.9px;top:129.9px;width:1.4px;height:0.8px;background:#dfe4de"></div><span class="t" style="left:724.7px;top:143.00px;font-size:7.8px;color:#e9ece8;transform:scaleX(0.829);">9</span><div class="a" style="left:728.9px;top:145.85px;width:1.4px;height:0.8px;background:#dfe4de"></div><span class="t" style="left:720.9px;top:159.00px;font-size:7.8px;color:#e9ece8;transform:scaleX(0.852);">12</span><div class="a" style="left:728.9px;top:161.8px;width:1.4px;height:0.8px;background:#dfe4de"></div><span class="t" style="left:720.9px;top:175.00px;font-size:7.8px;color:#e9ece8;transform:scaleX(0.852);">15</span><div class="a" style="left:728.9px;top:177.75px;width:1.4px;height:0.8px;background:#dfe4de"></div><span class="t" style="left:720.9px;top:191.00px;font-size:7.8px;color:#e9ece8;transform:scaleX(0.852);">18</span><div class="a" style="left:728.9px;top:193.7px;width:1.4px;height:0.8px;background:#dfe4de"></div><span class="t" style="left:720.9px;top:207.00px;font-size:7.8px;color:#e9ece8;transform:scaleX(0.852);">21</span><div class="a" style="left:728.9px;top:209.65px;width:1.4px;height:0.8px;background:#dfe4de"></div><span class="t" style="left:720.9px;top:223.00px;font-size:7.8px;color:#e9ece8;transform:scaleX(0.852);">24</span><div class="a" style="left:728.9px;top:225.6px;width:1.4px;height:0.8px;background:#dfe4de"></div><span class="t" style="left:720.9px;top:239.00px;font-size:7.8px;color:#e9ece8;transform:scaleX(0.852);">27</span><div class="a" style="left:728.9px;top:241.55px;width:1.4px;height:0.8px;background:#dfe4de"></div><span class="t" style="left:720.9px;top:255.00px;font-size:7.8px;color:#e9ece8;transform:scaleX(0.852);">30</span><div class="a" style="left:728.9px;top:257.5px;width:1.4px;height:0.8px;background:#dfe4de"></div><span class="t" style="left:720.9px;top:270.00px;font-size:7.8px;color:#e9ece8;transform:scaleX(0.852);">33</span><div class="a" style="left:728.9px;top:273.45px;width:1.4px;height:0.8px;background:#dfe4de"></div><span class="t" style="left:720.9px;top:286.00px;font-size:7.8px;color:#e9ece8;transform:scaleX(0.852);">36</span><div class="a" style="left:728.9px;top:289.4px;width:1.4px;height:0.8px;background:#dfe4de"></div><span class="t" style="left:720.9px;top:302.00px;font-size:7.8px;color:#e9ece8;transform:scaleX(0.852);">39</span><div class="a" style="left:728.9px;top:305.35px;width:1.4px;height:0.8px;background:#dfe4de"></div><span class="t" style="left:720.9px;top:318.00px;font-size:7.8px;color:#e9ece8;transform:scaleX(0.852);">42</span><div class="a" style="left:728.9px;top:321.3px;width:1.4px;height:0.8px;background:#dfe4de"></div><span class="t" style="left:720.9px;top:334.00px;font-size:7.8px;color:#e9ece8;transform:scaleX(0.852);">45</span><div class="a" style="left:728.9px;top:337.25px;width:1.4px;height:0.8px;background:#dfe4de"></div><span class="t" style="left:720.9px;top:350.00px;font-size:7.8px;color:#e9ece8;transform:scaleX(0.852);">48</span><div class="a" style="left:728.9px;top:353.2px;width:1.4px;height:0.8px;background:#dfe4de"></div><span class="t" style="left:720.9px;top:366.00px;font-size:7.8px;color:#e9ece8;transform:scaleX(0.852);">51</span><div class="a" style="left:728.9px;top:369.15px;width:1.4px;height:0.8px;background:#dfe4de"></div><span class="t" style="left:720.9px;top:382.00px;font-size:7.8px;color:#e9ece8;transform:scaleX(0.852);">54</span><div class="a" style="left:728.9px;top:385.1px;width:1.4px;height:0.8px;background:#dfe4de"></div><span class="t" style="left:720.9px;top:398.00px;font-size:7.8px;color:#e9ece8;transform:scaleX(0.852);">57</span><div class="a" style="left:728.9px;top:401.05px;width:1.4px;height:0.8px;background:#dfe4de"></div><span class="t" style="left:720.9px;top:414.00px;font-size:7.8px;color:#e9ece8;transform:scaleX(0.852);">60</span><div class="a" style="left:728.9px;top:417px;width:1.4px;height:0.8px;background:#dfe4de"></div><span class="t" style="left:720.9px;top:430.00px;font-size:7.8px;color:#e9ece8;transform:scaleX(0.852);">63</span><div class="a" style="left:728.9px;top:432.95px;width:1.4px;height:0.8px;background:#dfe4de"></div><span class="t" style="left:720.9px;top:446.00px;font-size:7.8px;color:#e9ece8;transform:scaleX(0.852);">66</span><div class="a" style="left:728.9px;top:448.9px;width:1.4px;height:0.8px;background:#dfe4de"></div><span class="t" style="left:720.9px;top:462.00px;font-size:7.8px;color:#e9ece8;transform:scaleX(0.852);">69</span><div class="a" style="left:728.9px;top:464.85px;width:1.4px;height:0.8px;background:#dfe4de"></div><span class="t" style="left:720.9px;top:478.00px;font-size:7.8px;color:#e9ece8;transform:scaleX(0.852);">72</span><div class="a" style="left:728.9px;top:480.8px;width:1.4px;height:0.8px;background:#dfe4de"></div><span class="t" style="left:720.9px;top:494.00px;font-size:7.8px;color:#e9ece8;transform:scaleX(0.852);">75</span><div class="a" style="left:728.9px;top:496.75px;width:1.4px;height:0.8px;background:#dfe4de"></div><span class="t" style="left:720.9px;top:510.00px;font-size:7.8px;color:#e9ece8;transform:scaleX(0.852);">78</span><div class="a" style="left:728.9px;top:512.7px;width:1.4px;height:0.8px;background:#dfe4de"></div><span class="t" style="left:720.9px;top:526.00px;font-size:7.8px;color:#e9ece8;transform:scaleX(0.852);">81</span><div class="a" style="left:728.9px;top:528.65px;width:1.4px;height:0.8px;background:#dfe4de"></div><span class="t" style="left:720.9px;top:542.00px;font-size:7.8px;color:#e9ece8;transform:scaleX(0.852);">84</span><div class="a" style="left:728.9px;top:544.6px;width:1.4px;height:0.8px;background:#dfe4de"></div><span class="t" style="left:720.9px;top:558.00px;font-size:7.8px;color:#e9ece8;transform:scaleX(0.852);">87</span><div class="a" style="left:728.9px;top:560.55px;width:1.4px;height:0.8px;background:#dfe4de"></div><div class="a" style="left:731.9px;top:98.7px;width:18.1px;height:477.9px;background:linear-gradient(180deg,#7b716b 0px,#8e8780 14px,#8f8f84 30px,#84978a 55px,#7a9482 90px,#769080 150px,#769080 100%);border-top:1px solid #6a625c"></div><span class="t" style="left:742px;top:111.00px;font-size:7.8px;color:#e9ece8;transform:scaleX(0.829);">3</span><div class="a" style="left:746.2px;top:113.95px;width:1.4px;height:0.8px;background:#dfe4de"></div><span class="t" style="left:742px;top:127.00px;font-size:7.8px;color:#e9ece8;transform:scaleX(0.829);">6</span><div class="a" style="left:746.2px;top:129.9px;width:1.4px;height:0.8px;background:#dfe4de"></div><span class="t" style="left:742px;top:143.00px;font-size:7.8px;color:#e9ece8;transform:scaleX(0.829);">9</span><div class="a" style="left:746.2px;top:145.85px;width:1.4px;height:0.8px;background:#dfe4de"></div><span class="t" style="left:738.2px;top:159.00px;font-size:7.8px;color:#e9ece8;transform:scaleX(0.852);">12</span><div class="a" style="left:746.2px;top:161.8px;width:1.4px;height:0.8px;background:#dfe4de"></div><span class="t" style="left:738.2px;top:175.00px;font-size:7.8px;color:#e9ece8;transform:scaleX(0.852);">15</span><div class="a" style="left:746.2px;top:177.75px;width:1.4px;height:0.8px;background:#dfe4de"></div><span class="t" style="left:738.2px;top:191.00px;font-size:7.8px;color:#e9ece8;transform:scaleX(0.852);">18</span><div class="a" style="left:746.2px;top:193.7px;width:1.4px;height:0.8px;background:#dfe4de"></div><span class="t" style="left:738.2px;top:207.00px;font-size:7.8px;color:#e9ece8;transform:scaleX(0.852);">21</span><div class="a" style="left:746.2px;top:209.65px;width:1.4px;height:0.8px;background:#dfe4de"></div><span class="t" style="left:738.2px;top:223.00px;font-size:7.8px;color:#e9ece8;transform:scaleX(0.852);">24</span><div class="a" style="left:746.2px;top:225.6px;width:1.4px;height:0.8px;background:#dfe4de"></div><span class="t" style="left:738.2px;top:239.00px;font-size:7.8px;color:#e9ece8;transform:scaleX(0.852);">27</span><div class="a" style="left:746.2px;top:241.55px;width:1.4px;height:0.8px;background:#dfe4de"></div><span class="t" style="left:738.2px;top:255.00px;font-size:7.8px;color:#e9ece8;transform:scaleX(0.852);">30</span><div class="a" style="left:746.2px;top:257.5px;width:1.4px;height:0.8px;background:#dfe4de"></div><span class="t" style="left:738.2px;top:270.00px;font-size:7.8px;color:#e9ece8;transform:scaleX(0.852);">33</span><div class="a" style="left:746.2px;top:273.45px;width:1.4px;height:0.8px;background:#dfe4de"></div><span class="t" style="left:738.2px;top:286.00px;font-size:7.8px;color:#e9ece8;transform:scaleX(0.852);">36</span><div class="a" style="left:746.2px;top:289.4px;width:1.4px;height:0.8px;background:#dfe4de"></div><span class="t" style="left:738.2px;top:302.00px;font-size:7.8px;color:#e9ece8;transform:scaleX(0.852);">39</span><div class="a" style="left:746.2px;top:305.35px;width:1.4px;height:0.8px;background:#dfe4de"></div><span class="t" style="left:738.2px;top:318.00px;font-size:7.8px;color:#e9ece8;transform:scaleX(0.852);">42</span><div class="a" style="left:746.2px;top:321.3px;width:1.4px;height:0.8px;background:#dfe4de"></div><span class="t" style="left:738.2px;top:334.00px;font-size:7.8px;color:#e9ece8;transform:scaleX(0.852);">45</span><div class="a" style="left:746.2px;top:337.25px;width:1.4px;height:0.8px;background:#dfe4de"></div><span class="t" style="left:738.2px;top:350.00px;font-size:7.8px;color:#e9ece8;transform:scaleX(0.852);">48</span><div class="a" style="left:746.2px;top:353.2px;width:1.4px;height:0.8px;background:#dfe4de"></div><span class="t" style="left:738.2px;top:366.00px;font-size:7.8px;color:#e9ece8;transform:scaleX(0.852);">51</span><div class="a" style="left:746.2px;top:369.15px;width:1.4px;height:0.8px;background:#dfe4de"></div><span class="t" style="left:738.2px;top:382.00px;font-size:7.8px;color:#e9ece8;transform:scaleX(0.852);">54</span><div class="a" style="left:746.2px;top:385.1px;width:1.4px;height:0.8px;background:#dfe4de"></div><span class="t" style="left:738.2px;top:398.00px;font-size:7.8px;color:#e9ece8;transform:scaleX(0.852);">57</span><div class="a" style="left:746.2px;top:401.05px;width:1.4px;height:0.8px;background:#dfe4de"></div><span class="t" style="left:738.2px;top:414.00px;font-size:7.8px;color:#e9ece8;transform:scaleX(0.852);">60</span><div class="a" style="left:746.2px;top:417px;width:1.4px;height:0.8px;background:#dfe4de"></div><span class="t" style="left:738.2px;top:430.00px;font-size:7.8px;color:#e9ece8;transform:scaleX(0.852);">63</span><div class="a" style="left:746.2px;top:432.95px;width:1.4px;height:0.8px;background:#dfe4de"></div><span class="t" style="left:738.2px;top:446.00px;font-size:7.8px;color:#e9ece8;transform:scaleX(0.852);">66</span><div class="a" style="left:746.2px;top:448.9px;width:1.4px;height:0.8px;background:#dfe4de"></div><span class="t" style="left:738.2px;top:462.00px;font-size:7.8px;color:#e9ece8;transform:scaleX(0.852);">69</span><div class="a" style="left:746.2px;top:464.85px;width:1.4px;height:0.8px;background:#dfe4de"></div><span class="t" style="left:738.2px;top:478.00px;font-size:7.8px;color:#e9ece8;transform:scaleX(0.852);">72</span><div class="a" style="left:746.2px;top:480.8px;width:1.4px;height:0.8px;background:#dfe4de"></div><span class="t" style="left:738.2px;top:494.00px;font-size:7.8px;color:#e9ece8;transform:scaleX(0.852);">75</span><div class="a" style="left:746.2px;top:496.75px;width:1.4px;height:0.8px;background:#dfe4de"></div><span class="t" style="left:738.2px;top:510.00px;font-size:7.8px;color:#e9ece8;transform:scaleX(0.852);">78</span><div class="a" style="left:746.2px;top:512.7px;width:1.4px;height:0.8px;background:#dfe4de"></div><span class="t" style="left:738.2px;top:526.00px;font-size:7.8px;color:#e9ece8;transform:scaleX(0.852);">81</span><div class="a" style="left:746.2px;top:528.65px;width:1.4px;height:0.8px;background:#dfe4de"></div><span class="t" style="left:738.2px;top:542.00px;font-size:7.8px;color:#e9ece8;transform:scaleX(0.852);">84</span><div class="a" style="left:746.2px;top:544.6px;width:1.4px;height:0.8px;background:#dfe4de"></div><span class="t" style="left:738.2px;top:558.00px;font-size:7.8px;color:#e9ece8;transform:scaleX(0.852);">87</span><div class="a" style="left:746.2px;top:560.55px;width:1.4px;height:0.8px;background:#dfe4de"></div>
</div>
</body></html>
